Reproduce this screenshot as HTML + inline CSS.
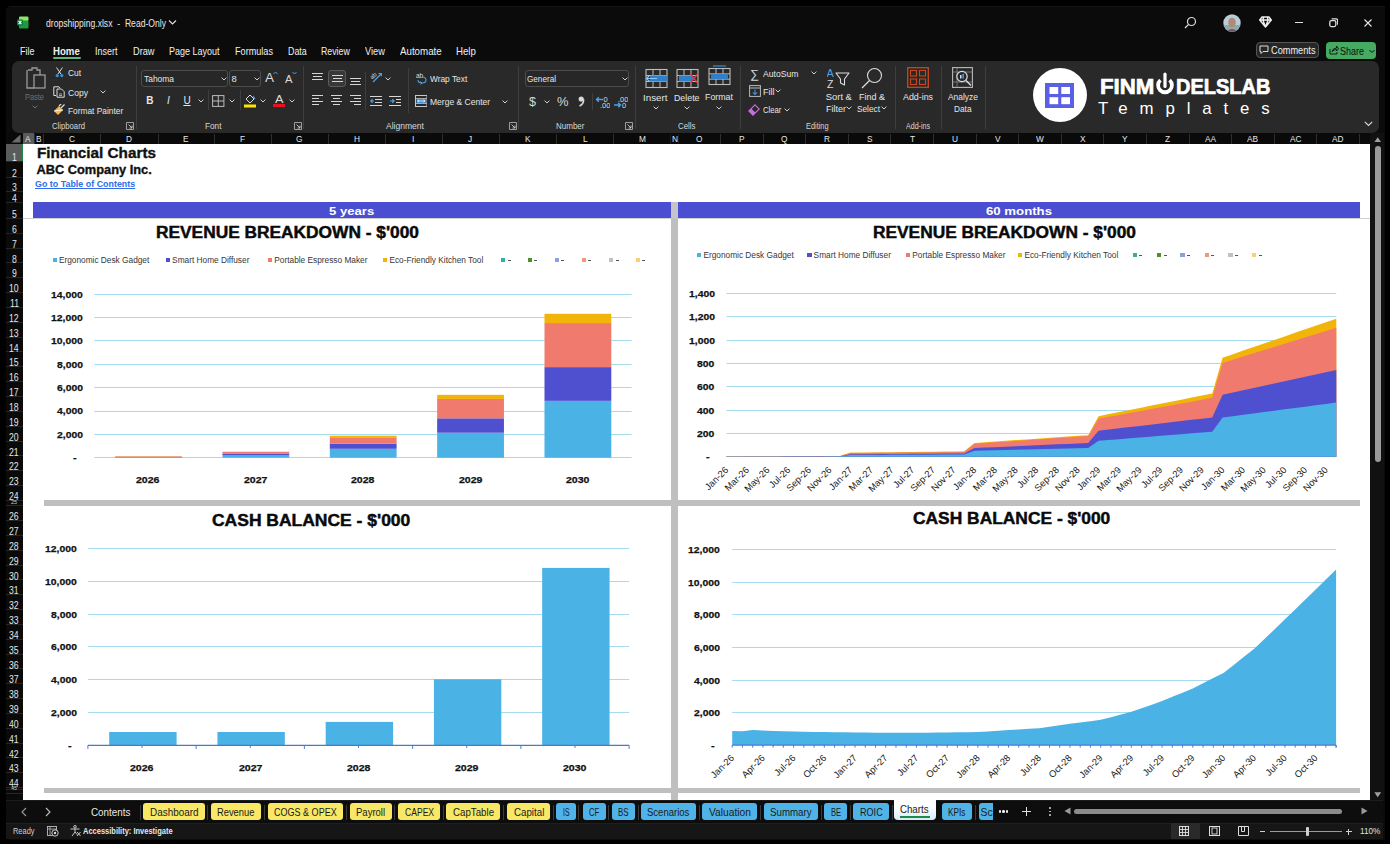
<!DOCTYPE html>
<html><head><meta charset="utf-8"><title>dropshipping.xlsx</title>
<style>
html,body{margin:0;padding:0;}
body{width:1390px;height:844px;overflow:hidden;background:#000;position:relative;font-family:'Liberation Sans', sans-serif;}
</style></head><body>
<div style="position:absolute;left:5.5px;top:5.5px;width:1379px;height:834px;background:#0b0b0b;border-radius:5px 0 0 5px;border-top:1px solid #141414;box-sizing:border-box;"></div><svg style="position:absolute;left:17px;top:16px" width="12" height="13" viewBox="0 0 12 13">
<rect x="2" y="0.5" width="9.5" height="4.5" rx="1.2" fill="#8ee56b"/>
<rect x="2" y="4.5" width="9.5" height="8" rx="1" fill="#1f9a3f"/>
<rect x="0" y="3.5" width="6" height="6" rx="1" fill="#107c41"/>
<path d="M1.6 4.8 L4.4 8.2 M4.4 4.8 L1.6 8.2" stroke="#fff" stroke-width="1.2"/>
</svg><svg style="position:absolute;left:168px;top:19px" width="9" height="7"><path d="M1 1.5 L4.5 5 L8 1.5" stroke="#ddd" stroke-width="1.2" fill="none"/></svg><svg style="position:absolute;left:1184px;top:16px" width="13" height="13" viewBox="0 0 13 13"><circle cx="7.5" cy="5.5" r="4" stroke="#ddd" stroke-width="1.2" fill="none"/><path d="M4.6 8.4 L1 12" stroke="#ddd" stroke-width="1.3"/></svg><svg style="position:absolute;left:1222.5px;top:13.5px" width="18" height="18" viewBox="0 0 18 18">
<defs><clipPath id="av"><circle cx="9" cy="9" r="8.7"/></clipPath></defs>
<g clip-path="url(#av)"><rect width="18" height="18" fill="#b9cdd6"/><rect y="11" width="18" height="7" fill="#8fa9b3"/>
<ellipse cx="9" cy="8.5" rx="3.8" ry="4.8" fill="#b08a78"/><path d="M3 18 Q9 12 15 18Z" fill="#6a5a54"/></g></svg><svg style="position:absolute;left:1259px;top:16px" width="13" height="12" viewBox="0 0 13 12"><path d="M3 1 H10 L12.3 4 L6.5 11 L0.7 4 Z M0.7 4 H12.3 M4.6 1 L3.9 4 L6.5 11 L9.1 4 L8.4 1" stroke="#f0f0f0" stroke-width="1.4" fill="none" stroke-linejoin="round"/></svg><div style="position:absolute;left:1295px;top:21.6px;width:7.5px;height:1.6px;background:#e0e0e0;"></div><svg style="position:absolute;left:1328.5px;top:18px" width="9.5" height="9.5" viewBox="0 0 9.5 9.5"><rect x="0.8" y="2.6" width="6" height="6" rx="1.5" stroke="#e0e0e0" stroke-width="1.3" fill="none"/><path d="M2.6 0.8 H7 Q8.7 0.8 8.7 2.5 V6.8" stroke="#e0e0e0" stroke-width="1.3" fill="none"/></svg><svg style="position:absolute;left:1363.5px;top:18.5px" width="8" height="8" viewBox="0 0 8 8"><path d="M0.5 0.5 L7.5 7.5 M7.5 0.5 L0.5 7.5" stroke="#e8e8e8" stroke-width="1.1"/></svg><div style="position:absolute;left:53px;top:57px;width:28px;height:2px;background:#5fb878;border-radius:1px;"></div><div style="position:absolute;left:1255.5px;top:41.5px;width:63px;height:16.5px;border:1px solid #555;border-radius:4px;background:#262626;box-sizing:border-box"></div><svg style="position:absolute;left:1259px;top:45px" width="10" height="10" viewBox="0 0 10 10"><path d="M1 1 H9 V6.5 H4 L2 8.5 V6.5 H1 Z" stroke="#ddd" stroke-width="1" fill="none"/></svg><div style="position:absolute;left:1326px;top:41.5px;width:50px;height:17px;border-radius:4px;background:#45aa62"></div><svg style="position:absolute;left:1329px;top:45px" width="10" height="10" viewBox="0 0 10 10"><path d="M1 4 V9 H8 V7 M3 6.5 Q4 3 7.5 3 V1 L9.5 4 L7.5 6 V4.5 Q5 4.5 3 6.5" stroke="#111" stroke-width="0.9" fill="none"/></svg><svg style="position:absolute;left:1368.5px;top:49px" width="6" height="5"><path d="M0.5 1 L3 3.5 L5.5 1" stroke="#111" stroke-width="1" fill="none"/></svg><div style="position:absolute;left:11.7px;top:61.3px;width:1367px;height:71.4px;background:#292929;border-radius:7px;"></div><div style="position:absolute;left:135.8px;top:66px;width:1px;height:63px;background:#3e3e3e;"></div><div style="position:absolute;left:303.4px;top:66px;width:1px;height:63px;background:#3e3e3e;"></div><div style="position:absolute;left:518.3px;top:66px;width:1px;height:63px;background:#3e3e3e;"></div><div style="position:absolute;left:635px;top:66px;width:1px;height:63px;background:#3e3e3e;"></div><div style="position:absolute;left:739.7px;top:66px;width:1px;height:63px;background:#3e3e3e;"></div><div style="position:absolute;left:894.7px;top:66px;width:1px;height:63px;background:#3e3e3e;"></div><div style="position:absolute;left:940.8px;top:66px;width:1px;height:63px;background:#3e3e3e;"></div><div style="position:absolute;left:984.5px;top:66px;width:1px;height:63px;background:#3e3e3e;"></div><svg style="position:absolute;left:125.5px;top:122px" width="8" height="8" viewBox="0 0 8 8"><path d="M0.5 0.5 H7.5 V7.5 H0.5 Z" stroke="#bbb" stroke-width="0.8" fill="none"/><path d="M2.5 2.5 L6 6 M3.5 6 H6 V3.5" stroke="#ccc" stroke-width="0.9" fill="none"/></svg><svg style="position:absolute;left:293.5px;top:122px" width="8" height="8" viewBox="0 0 8 8"><path d="M0.5 0.5 H7.5 V7.5 H0.5 Z" stroke="#bbb" stroke-width="0.8" fill="none"/><path d="M2.5 2.5 L6 6 M3.5 6 H6 V3.5" stroke="#ccc" stroke-width="0.9" fill="none"/></svg><svg style="position:absolute;left:508.9px;top:122px" width="8" height="8" viewBox="0 0 8 8"><path d="M0.5 0.5 H7.5 V7.5 H0.5 Z" stroke="#bbb" stroke-width="0.8" fill="none"/><path d="M2.5 2.5 L6 6 M3.5 6 H6 V3.5" stroke="#ccc" stroke-width="0.9" fill="none"/></svg><svg style="position:absolute;left:625.1px;top:122px" width="8" height="8" viewBox="0 0 8 8"><path d="M0.5 0.5 H7.5 V7.5 H0.5 Z" stroke="#bbb" stroke-width="0.8" fill="none"/><path d="M2.5 2.5 L6 6 M3.5 6 H6 V3.5" stroke="#ccc" stroke-width="0.9" fill="none"/></svg><svg style="position:absolute;left:25px;top:66px" width="22" height="24" viewBox="0 0 22 24">
<path d="M3 4 H7 V2 H12 V4 H15 V9 M9 22 H2 V4" stroke="#9a9a9a" stroke-width="1.3" fill="none"/>
<rect x="9" y="9" width="11" height="13" stroke="#9a9a9a" stroke-width="1.3" fill="none"/></svg><svg style="position:absolute;left:31.5px;top:105px" width="6" height="4"><path d="M0.6 0.6 L3 3 L5.4 0.6" stroke="#707070" stroke-width="1.0" fill="none"/></svg><svg style="position:absolute;left:55px;top:67px" width="9" height="11" viewBox="0 0 9 11"><path d="M1.5 0.5 L6 7 M7.5 0.5 L3 7" stroke="#ddd" stroke-width="1"/><circle cx="2.2" cy="8.6" r="1.6" fill="#3a8fd8"/><circle cx="6.8" cy="8.6" r="1.6" fill="#3a8fd8"/></svg><svg style="position:absolute;left:53px;top:86px" width="12" height="12" viewBox="0 0 12 12"><path d="M3 9.5 H0.8 V0.8 H6 L7 2" stroke="#ddd" stroke-width="1" fill="none"/><path d="M4 3 H8.5 L11.2 5.7 V11.2 H4 Z" stroke="#ddd" stroke-width="1" fill="none"/><path d="M6 8 H9 M6 9.5 H9" stroke="#ddd" stroke-width="0.7"/></svg><svg style="position:absolute;left:99.9px;top:90.2px" width="6" height="4"><path d="M0.6 0.6 L3 3 L5.4 0.6" stroke="#d0d0d0" stroke-width="1.0" fill="none"/></svg><svg style="position:absolute;left:53px;top:104px" width="12" height="12" viewBox="0 0 12 12"><path d="M1 7 L6 2 L10 6 L5 11 Z" fill="#f2b84b"/><path d="M6 2 L8.5 -0.5 M8 4 L11.5 0.5" stroke="#ddd" stroke-width="1.2"/><path d="M1 7 L10 6" stroke="#fff" stroke-width="0.8"/></svg><div style="position:absolute;left:141.2px;top:70.2px;width:86.4px;height:17.3px;border:1px solid #4c4c4c;border-radius:3px;background:#272727;box-sizing:border-box"></div><svg style="position:absolute;left:220.5px;top:76.8px" width="6" height="4"><path d="M0.6 0.6 L3 3 L5.4 0.6" stroke="#d0d0d0" stroke-width="1.0" fill="none"/></svg><div style="position:absolute;left:229.3px;top:70.2px;width:31.3px;height:17.3px;border:1px solid #4c4c4c;border-radius:3px;background:#272727;box-sizing:border-box"></div><svg style="position:absolute;left:253.5px;top:76.8px" width="6" height="4"><path d="M0.6 0.6 L3 3 L5.4 0.6" stroke="#d0d0d0" stroke-width="1.0" fill="none"/></svg><svg style="position:absolute;left:273px;top:71px" width="5" height="4"><path d="M0.5 3 L2.5 1 L4.5 3" stroke="#4aa3e8" stroke-width="1" fill="none"/></svg><svg style="position:absolute;left:292px;top:71px" width="5" height="4"><path d="M0.5 1 L2.5 3 L4.5 1" stroke="#4aa3e8" stroke-width="1" fill="none"/></svg><svg style="position:absolute;left:198px;top:99px" width="6" height="4"><path d="M0.6 0.6 L3 3 L5.4 0.6" stroke="#d0d0d0" stroke-width="1.0" fill="none"/></svg><div style="position:absolute;left:208.4px;top:90px;width:1px;height:20px;background:#3e3e3e;"></div><svg style="position:absolute;left:212px;top:94.5px" width="12.5" height="12" viewBox="0 0 12.5 12"><rect x="0.6" y="0.6" width="11.3" height="10.8" stroke="#bbb" stroke-width="1" fill="none"/><path d="M6.25 0.6 V11.4 M0.6 6 H11.9" stroke="#bbb" stroke-width="1"/></svg><svg style="position:absolute;left:229px;top:99px" width="6" height="4"><path d="M0.6 0.6 L3 3 L5.4 0.6" stroke="#d0d0d0" stroke-width="1.0" fill="none"/></svg><div style="position:absolute;left:239.6px;top:90px;width:1px;height:20px;background:#3e3e3e;"></div><svg style="position:absolute;left:243.5px;top:93px" width="12" height="15" viewBox="0 0 12 15"><path d="M2 6 L6 2 L10 6 L6 10 Z" stroke="#ddd" stroke-width="1" fill="none"/><path d="M9 3 L11 6" stroke="#4aa3e8" stroke-width="1.2"/><rect x="0" y="11.5" width="12" height="3" fill="#ffe600"/></svg><svg style="position:absolute;left:259.5px;top:99px" width="6" height="4"><path d="M0.6 0.6 L3 3 L5.4 0.6" stroke="#d0d0d0" stroke-width="1.0" fill="none"/></svg><div style="position:absolute;left:273.2px;top:104.3px;width:11.5px;height:3px;background:#e81123;"></div><svg style="position:absolute;left:289px;top:99px" width="6" height="4"><path d="M0.6 0.6 L3 3 L5.4 0.6" stroke="#d0d0d0" stroke-width="1.0" fill="none"/></svg><svg style="position:absolute;left:312px;top:73px" width="11" height="10"><rect x="0.0" y="0" width="11" height="1" fill="#d6d6d6"/><rect x="1.0" y="3" width="9" height="1" fill="#d6d6d6"/><rect x="0.0" y="6" width="11" height="1" fill="#d6d6d6"/></svg><div style="position:absolute;left:328.2px;top:69.9px;width:17.7px;height:17.4px;border:1px solid #5a5a5a;border-radius:3px;background:#383838;box-sizing:border-box"></div><svg style="position:absolute;left:331.5px;top:75px" width="11" height="10"><rect x="0.0" y="0" width="11" height="1" fill="#d6d6d6"/><rect x="1.0" y="3" width="9" height="1" fill="#d6d6d6"/><rect x="0.0" y="6" width="11" height="1" fill="#d6d6d6"/></svg><svg style="position:absolute;left:350px;top:78px" width="11" height="10"><rect x="0.0" y="0" width="11" height="1" fill="#d6d6d6"/><rect x="1.0" y="3" width="9" height="1" fill="#d6d6d6"/><rect x="0.0" y="6" width="11" height="1" fill="#d6d6d6"/></svg><div style="position:absolute;left:365.2px;top:72px;width:1px;height:38px;background:#3e3e3e;"></div><svg style="position:absolute;left:370px;top:71px" width="13" height="13" viewBox="0 0 13 13"><path d="M3 11 L11 3" stroke="#4aa3e8" stroke-width="1.3"/><path d="M8.5 2.5 H11.3 V5.3" stroke="#4aa3e8" stroke-width="1.2" fill="none"/><text x="0" y="7" font-size="6" fill="#ddd" font-family="Liberation Sans" transform="rotate(-45 3 5)">ab</text></svg><svg style="position:absolute;left:384.8px;top:76.5px" width="6" height="4"><path d="M0.6 0.6 L3 3 L5.4 0.6" stroke="#d0d0d0" stroke-width="1.0" fill="none"/></svg><svg style="position:absolute;left:312px;top:95px" width="11" height="13"><rect x="0" y="0" width="11" height="1" fill="#d6d6d6"/><rect x="0" y="3" width="7" height="1" fill="#d6d6d6"/><rect x="0" y="6" width="11" height="1" fill="#d6d6d6"/><rect x="0" y="9" width="7" height="1" fill="#d6d6d6"/></svg><svg style="position:absolute;left:331px;top:95px" width="11" height="13"><rect x="0.0" y="0" width="11" height="1" fill="#d6d6d6"/><rect x="2.0" y="3" width="7" height="1" fill="#d6d6d6"/><rect x="0.0" y="6" width="11" height="1" fill="#d6d6d6"/><rect x="2.0" y="9" width="7" height="1" fill="#d6d6d6"/></svg><svg style="position:absolute;left:350px;top:95px" width="11" height="13"><rect x="0" y="0" width="11" height="1" fill="#d6d6d6"/><rect x="4" y="3" width="7" height="1" fill="#d6d6d6"/><rect x="0" y="6" width="11" height="1" fill="#d6d6d6"/><rect x="4" y="9" width="7" height="1" fill="#d6d6d6"/></svg><svg style="position:absolute;left:370px;top:95px" width="12" height="12" viewBox="0 0 12 12"><path d="M0 1.5 H12 M5 4.5 H12 M5 7.5 H12 M0 10.5 H12" stroke="#d6d6d6" stroke-width="1"/><path d="M4 6 H0.8 M2.5 4.2 L0.8 6 L2.5 7.8" stroke="#4aa3e8" stroke-width="1.2" fill="none"/></svg><svg style="position:absolute;left:389px;top:95px" width="12" height="12" viewBox="0 0 12 12"><path d="M0 1.5 H12 M7 4.5 H12 M7 7.5 H12 M0 10.5 H12" stroke="#d6d6d6" stroke-width="1"/><path d="M0.8 6 H5 M3.3 4.2 L5 6 L3.3 7.8" stroke="#4aa3e8" stroke-width="1.2" fill="none"/></svg><div style="position:absolute;left:407.6px;top:68px;width:1px;height:45px;background:#3e3e3e;"></div><svg style="position:absolute;left:416px;top:72px" width="12" height="13" viewBox="0 0 12 13"><text x="0" y="6" font-size="6.5" fill="#ddd" font-family="Liberation Sans">ab</text><path d="M2 8 Q2 11 6 11 Q10 11 10 8 Q10 5 6 5" stroke="#4aa3e8" stroke-width="1.1" fill="none"/><path d="M4.5 9.5 L6 11 L4.5 12.5" stroke="#4aa3e8" stroke-width="1" fill="none"/></svg><svg style="position:absolute;left:414.5px;top:95px" width="12.5" height="12" viewBox="0 0 12.5 12"><rect x="0.5" y="0.5" width="11.5" height="11" stroke="#c8c8c8" stroke-width="1" fill="none"/><path d="M0.5 3.5 H12 M0.5 8.5 H12" stroke="#c8c8c8" stroke-width="0.8"/><rect x="1.5" y="4" width="9.5" height="4" fill="#3a8fd8"/><path d="M2.5 6 H10 M4 4.8 L2.5 6 L4 7.2 M8.5 4.8 L10 6 L8.5 7.2" stroke="#e8f4ff" stroke-width="0.8" fill="none"/></svg><svg style="position:absolute;left:502px;top:100px" width="6" height="4"><path d="M0.6 0.6 L3 3 L5.4 0.6" stroke="#d0d0d0" stroke-width="1.0" fill="none"/></svg><div style="position:absolute;left:525.2px;top:69.9px;width:104.3px;height:17.6px;border:1px solid #4c4c4c;border-radius:3px;background:#272727;box-sizing:border-box"></div><svg style="position:absolute;left:621.5px;top:76.6px" width="6" height="4"><path d="M0.6 0.6 L3 3 L5.4 0.6" stroke="#d0d0d0" stroke-width="1.0" fill="none"/></svg><svg style="position:absolute;left:544px;top:99.5px" width="6" height="4"><path d="M0.6 0.6 L3 3 L5.4 0.6" stroke="#d0d0d0" stroke-width="1.0" fill="none"/></svg><svg style="position:absolute;left:578px;top:96px" width="7" height="11" viewBox="0 0 7 11"><circle cx="3.2" cy="3" r="2.6" fill="#d8d8d8"/><path d="M5.6 3.2 Q5.8 8 1.5 10" stroke="#d8d8d8" stroke-width="1.6" fill="none"/></svg><div style="position:absolute;left:591.6px;top:93px;width:1px;height:17px;background:#3e3e3e;"></div><svg style="position:absolute;left:595px;top:95px" width="15" height="14" viewBox="0 0 15 14"><text x="8.5" y="6.5" font-size="7.5" fill="#ddd" font-family="Liberation Sans">0</text><text x="5" y="12.8" font-size="7.5" fill="#ddd" font-family="Liberation Sans">.00</text><path d="M8 4.5 H1.5 M3.8 2.2 L1.5 4.5 L3.8 6.8" stroke="#4aa3e8" stroke-width="1.4" fill="none"/></svg><svg style="position:absolute;left:613px;top:95px" width="15" height="14" viewBox="0 0 15 14"><text x="5" y="6.5" font-size="7.5" fill="#ddd" font-family="Liberation Sans">.00</text><text x="9" y="12.8" font-size="7.5" fill="#ddd" font-family="Liberation Sans">0</text><path d="M1 10 H7.5 M5.2 7.7 L7.5 10 L5.2 12.3" stroke="#4aa3e8" stroke-width="1.4" fill="none"/></svg><svg style="position:absolute;left:644.9px;top:67.5px" width="23" height="21" viewBox="0 0 23 21"><rect x="1" y="1.5" width="21" height="18.0" stroke="#bdbdbd" stroke-width="1.1" fill="none"/><path d="M1 7.5 H22" stroke="#bdbdbd" stroke-width="1"/><path d="M1 13.5 H22" stroke="#bdbdbd" stroke-width="1"/><path d="M8 1.5 V19.5" stroke="#bdbdbd" stroke-width="1"/><path d="M15 1.5 V19.5" stroke="#bdbdbd" stroke-width="1"/><rect x="5" y="7.5" width="18" height="6.0" fill="#2f80c8"/><path d="M12 10.5 H1.5 M4.5 7.5 L1.5 10.5 L4.5 13.5" stroke="#8fc6f5" stroke-width="1.2" fill="none"/></svg><svg style="position:absolute;left:676.3px;top:67.5px" width="23" height="21" viewBox="0 0 23 21"><rect x="1" y="1.5" width="21" height="18.0" stroke="#bdbdbd" stroke-width="1.1" fill="none"/><path d="M1 7.5 H22" stroke="#bdbdbd" stroke-width="1"/><path d="M1 13.5 H22" stroke="#bdbdbd" stroke-width="1"/><path d="M8 1.5 V19.5" stroke="#bdbdbd" stroke-width="1"/><path d="M15 1.5 V19.5" stroke="#bdbdbd" stroke-width="1"/><rect x="3" y="7.5" width="14" height="6.0" fill="#2f80c8"/><path d="M14 5.5 L22 15.5 M22 5.5 L14 15.5" stroke="#e23b3b" stroke-width="1.4"/></svg><svg style="position:absolute;left:707.7px;top:64.5px" width="23" height="21" viewBox="0 0 23 21"><path d="M5 1 H18" stroke="#3a8fd8" stroke-width="1.2"/><rect x="1" y="3.5" width="21" height="16.0" stroke="#bdbdbd" stroke-width="1.1" fill="none"/><path d="M1 8.833333333333332 H22" stroke="#bdbdbd" stroke-width="1"/><path d="M1 14.166666666666666 H22" stroke="#bdbdbd" stroke-width="1"/><path d="M8 3.5 V19.5" stroke="#bdbdbd" stroke-width="1"/><path d="M15 3.5 V19.5" stroke="#bdbdbd" stroke-width="1"/><rect x="3" y="8.833333333333332" width="17" height="5.333333333333333" fill="#2f80c8"/></svg><svg style="position:absolute;left:652.6px;top:106px" width="6" height="4"><path d="M0.6 0.6 L3 3 L5.4 0.6" stroke="#d0d0d0" stroke-width="1.0" fill="none"/></svg><svg style="position:absolute;left:683.7px;top:106px" width="6" height="4"><path d="M0.6 0.6 L3 3 L5.4 0.6" stroke="#d0d0d0" stroke-width="1.0" fill="none"/></svg><svg style="position:absolute;left:715.8px;top:106px" width="6" height="4"><path d="M0.6 0.6 L3 3 L5.4 0.6" stroke="#d0d0d0" stroke-width="1.0" fill="none"/></svg><svg style="position:absolute;left:810.9px;top:71px" width="6" height="4"><path d="M0.6 0.6 L3 3 L5.4 0.6" stroke="#d0d0d0" stroke-width="1.0" fill="none"/></svg><svg style="position:absolute;left:748.5px;top:85px" width="12" height="12" viewBox="0 0 12 12"><rect x="0.6" y="0.6" width="10.8" height="10.8" stroke="#bbb" stroke-width="1" fill="none"/><path d="M0.6 3 H11.4" stroke="#bbb" stroke-width="1"/><path d="M6 4.5 V9.5 M3.8 7.3 L6 9.5 L8.2 7.3" stroke="#3a8fd8" stroke-width="1.2" fill="none"/></svg><svg style="position:absolute;left:775px;top:89.4px" width="6" height="4"><path d="M0.6 0.6 L3 3 L5.4 0.6" stroke="#d0d0d0" stroke-width="1.0" fill="none"/></svg><svg style="position:absolute;left:748px;top:104px" width="12" height="12" viewBox="0 0 12 12"><path d="M7 0.8 L11.2 5 L5 11.2 L0.8 7 Z" stroke="#c86ee0" stroke-width="1.1" fill="none"/><path d="M0.8 7 L5 11.2 L7.5 8.7 L3.3 4.5 Z" fill="#c86ee0"/></svg><svg style="position:absolute;left:783.5px;top:108px" width="6" height="4"><path d="M0.6 0.6 L3 3 L5.4 0.6" stroke="#d0d0d0" stroke-width="1.0" fill="none"/></svg><svg style="position:absolute;left:827px;top:68px" width="23" height="20" viewBox="0 0 23 20">
<text x="-0.5" y="9" font-size="11" fill="#4aa3e8" font-family="Liberation Sans">A</text>
<text x="0" y="19.5" font-size="10.5" fill="#ddd" font-family="Liberation Sans">Z</text>
<path d="M9 5 H22 L17.5 11 V17 L13.5 15 V11 Z" stroke="#ddd" stroke-width="1.1" fill="none" stroke-linejoin="round"/></svg><svg style="position:absolute;left:845.5px;top:106.3px" width="6" height="4"><path d="M0.6 0.6 L3 3 L5.4 0.6" stroke="#d0d0d0" stroke-width="1.0" fill="none"/></svg><svg style="position:absolute;left:861px;top:67px" width="22" height="22" viewBox="0 0 22 22"><circle cx="13.5" cy="8.5" r="7" stroke="#ddd" stroke-width="1.1" fill="none"/><path d="M8.5 13.5 L1 21" stroke="#ddd" stroke-width="1.2"/></svg><svg style="position:absolute;left:881px;top:106.3px" width="6" height="4"><path d="M0.6 0.6 L3 3 L5.4 0.6" stroke="#d0d0d0" stroke-width="1.0" fill="none"/></svg><svg style="position:absolute;left:907px;top:66.5px" width="22" height="21" viewBox="0 0 22 21"><rect x="0.7" y="0.7" width="20.6" height="19.6" stroke="#c8471d" stroke-width="1.3" fill="none"/><rect x="3.5" y="3.5" width="6" height="5.5" stroke="#c8471d" stroke-width="1.1" fill="none"/><rect x="12.5" y="3.5" width="6" height="5.5" stroke="#c8471d" stroke-width="1.1" fill="none"/><rect x="3.5" y="12" width="6" height="5.5" stroke="#c8471d" stroke-width="1.1" fill="none"/><rect x="12.5" y="12" width="6" height="5.5" stroke="#c8471d" stroke-width="1.1" fill="none"/></svg><svg style="position:absolute;left:952px;top:67px" width="21" height="21" viewBox="0 0 21 21">
<rect x="0.6" y="0.6" width="19.8" height="19.8" stroke="#bbb" stroke-width="1.1" fill="none"/>
<path d="M0.6 5 H20.4 M0.6 15 H20.4 M5 0.6 V20.4" stroke="#888" stroke-width="0.8"/>
<circle cx="10" cy="9.5" r="5.2" stroke="#ddd" stroke-width="1.2" fill="#292929"/><rect x="8" y="8" width="1.5" height="3.5" fill="#ddd"/><rect x="10.3" y="6.8" width="1.7" height="4.7" fill="#3a8fd8"/>
<path d="M14 13.5 L19 18.5" stroke="#ddd" stroke-width="1.4"/></svg><svg style="position:absolute;left:1364px;top:120.5px" width="9" height="6"><path d="M0.8 0.8 L4.5 4.5 L8.2 0.8" stroke="#ddd" stroke-width="1.1" fill="none"/></svg><div style="position:absolute;left:1032.6px;top:67.9px;width:54.4px;height:54.4px;border-radius:50%;background:#fff"></div><svg style="position:absolute;left:1044.9px;top:82.5px" width="29.5" height="25.2" viewBox="0 0 29.5 25.2"><rect x="0" y="0" width="29.5" height="25.2" fill="#5b5fe3"/><rect x="4.5" y="4" width="8.7" height="7" fill="#fff"/><rect x="16.3" y="4" width="8.7" height="7" fill="#fff"/><rect x="4.5" y="14.2" width="8.7" height="7" fill="#fff"/><rect x="16.3" y="14.2" width="8.7" height="7" fill="#fff"/></svg><svg style="position:absolute;left:1154px;top:72px" width="22" height="24" viewBox="0 0 22 24"><path d="M6.4 8.2 A6.9 6.9 0 1 0 15.6 8.2" stroke="#fff" stroke-width="3.8" fill="none"/><path d="M11 2.2 V14.5" stroke="#fff" stroke-width="3.2" stroke-linecap="round"/></svg><div style="position:absolute;left:5.5px;top:133px;width:1365px;height:10.5px;background:#0a0a0a;"></div><svg style="position:absolute;left:10px;top:134px" width="11" height="9"><path d="M10.5 0.5 V8.5 H1.5 Z" fill="#6a6a6a"/></svg><div style="position:absolute;left:22.5px;top:133px;width:11.5px;height:10.5px;background:#5b5b5b;"></div><div style="position:absolute;left:33.5px;top:133.5px;width:1px;height:10px;background:#2e2e2e;"></div><div style="position:absolute;left:43.0px;top:133.5px;width:1px;height:10px;background:#2e2e2e;"></div><div style="position:absolute;left:99.7px;top:133.5px;width:1px;height:10px;background:#2e2e2e;"></div><div style="position:absolute;left:157.5px;top:133.5px;width:1px;height:10px;background:#2e2e2e;"></div><div style="position:absolute;left:213.7px;top:133.5px;width:1px;height:10px;background:#2e2e2e;"></div><div style="position:absolute;left:270.5px;top:133.5px;width:1px;height:10px;background:#2e2e2e;"></div><div style="position:absolute;left:327.5px;top:133.5px;width:1px;height:10px;background:#2e2e2e;"></div><div style="position:absolute;left:384.5px;top:133.5px;width:1px;height:10px;background:#2e2e2e;"></div><div style="position:absolute;left:441.5px;top:133.5px;width:1px;height:10px;background:#2e2e2e;"></div><div style="position:absolute;left:498.5px;top:133.5px;width:1px;height:10px;background:#2e2e2e;"></div><div style="position:absolute;left:556.3px;top:133.5px;width:1px;height:10px;background:#2e2e2e;"></div><div style="position:absolute;left:613.4px;top:133.5px;width:1px;height:10px;background:#2e2e2e;"></div><div style="position:absolute;left:670.2px;top:133.5px;width:1px;height:10px;background:#1c1c1c;"></div><div style="position:absolute;left:677.8px;top:133.5px;width:1px;height:10px;background:#1c1c1c;"></div><div style="position:absolute;left:720.0px;top:133.5px;width:1px;height:10px;background:#2e2e2e;"></div><div style="position:absolute;left:762.6px;top:133.5px;width:1px;height:10px;background:#2e2e2e;"></div><div style="position:absolute;left:805.2px;top:133.5px;width:1px;height:10px;background:#2e2e2e;"></div><div style="position:absolute;left:847.8000000000001px;top:133.5px;width:1px;height:10px;background:#2e2e2e;"></div><div style="position:absolute;left:890.4000000000001px;top:133.5px;width:1px;height:10px;background:#2e2e2e;"></div><div style="position:absolute;left:933.0000000000001px;top:133.5px;width:1px;height:10px;background:#2e2e2e;"></div><div style="position:absolute;left:975.6000000000001px;top:133.5px;width:1px;height:10px;background:#2e2e2e;"></div><div style="position:absolute;left:1018.2000000000002px;top:133.5px;width:1px;height:10px;background:#2e2e2e;"></div><div style="position:absolute;left:1060.8000000000002px;top:133.5px;width:1px;height:10px;background:#2e2e2e;"></div><div style="position:absolute;left:1103.4px;top:133.5px;width:1px;height:10px;background:#2e2e2e;"></div><div style="position:absolute;left:1146.0px;top:133.5px;width:1px;height:10px;background:#2e2e2e;"></div><div style="position:absolute;left:1188.6px;top:133.5px;width:1px;height:10px;background:#2e2e2e;"></div><div style="position:absolute;left:1231.1999999999998px;top:133.5px;width:1px;height:10px;background:#2e2e2e;"></div><div style="position:absolute;left:1273.7999999999997px;top:133.5px;width:1px;height:10px;background:#2e2e2e;"></div><div style="position:absolute;left:1316.3999999999996px;top:133.5px;width:1px;height:10px;background:#2e2e2e;"></div><div style="position:absolute;left:1358.9999999999995px;top:133.5px;width:1px;height:10px;background:#2e2e2e;"></div><div style="position:absolute;left:22.5px;top:142.5px;width:11.5px;height:1px;background:#1e8a4a;"></div><div style="position:absolute;left:5.5px;top:143.5px;width:17px;height:656.5px;background:#0a0a0a;"></div><div style="position:absolute;left:5.5px;top:143.5px;width:17px;height:17.5px;background:#5b5b5b;"></div><div style="position:absolute;left:22px;top:143.5px;width:1px;height:17.5px;background:#1e8a4a;"></div><div style="position:absolute;left:5.5px;top:160.5px;width:17px;height:1px;background:#262626;"></div><div style="position:absolute;left:5.5px;top:176.5px;width:17px;height:1px;background:#262626;"></div><div style="position:absolute;left:5.5px;top:190.5px;width:17px;height:1px;background:#262626;"></div><div style="position:absolute;left:5.5px;top:202.0px;width:17px;height:1px;background:#262626;"></div><div style="position:absolute;left:5.5px;top:217.8px;width:17px;height:1px;background:#262626;"></div><div style="position:absolute;left:5.5px;top:232.65px;width:17px;height:1px;background:#262626;"></div><div style="position:absolute;left:5.5px;top:247.5px;width:17px;height:1px;background:#262626;"></div><div style="position:absolute;left:5.5px;top:262.35px;width:17px;height:1px;background:#262626;"></div><div style="position:absolute;left:5.5px;top:277.20000000000005px;width:17px;height:1px;background:#262626;"></div><div style="position:absolute;left:5.5px;top:292.05000000000007px;width:17px;height:1px;background:#262626;"></div><div style="position:absolute;left:5.5px;top:306.9000000000001px;width:17px;height:1px;background:#262626;"></div><div style="position:absolute;left:5.5px;top:321.7500000000001px;width:17px;height:1px;background:#262626;"></div><div style="position:absolute;left:5.5px;top:336.60000000000014px;width:17px;height:1px;background:#262626;"></div><div style="position:absolute;left:5.5px;top:351.45000000000016px;width:17px;height:1px;background:#262626;"></div><div style="position:absolute;left:5.5px;top:366.3000000000002px;width:17px;height:1px;background:#262626;"></div><div style="position:absolute;left:5.5px;top:381.1500000000002px;width:17px;height:1px;background:#262626;"></div><div style="position:absolute;left:5.5px;top:396.0000000000002px;width:17px;height:1px;background:#262626;"></div><div style="position:absolute;left:5.5px;top:410.85000000000025px;width:17px;height:1px;background:#262626;"></div><div style="position:absolute;left:5.5px;top:425.7000000000003px;width:17px;height:1px;background:#262626;"></div><div style="position:absolute;left:5.5px;top:440.5500000000003px;width:17px;height:1px;background:#262626;"></div><div style="position:absolute;left:5.5px;top:455.4000000000003px;width:17px;height:1px;background:#262626;"></div><div style="position:absolute;left:5.5px;top:470.25000000000034px;width:17px;height:1px;background:#262626;"></div><div style="position:absolute;left:5.5px;top:485.10000000000036px;width:17px;height:1px;background:#262626;"></div><div style="position:absolute;left:5.5px;top:500.0px;width:17px;height:1px;background:#262626;"></div><div style="position:absolute;left:5.5px;top:505.2px;width:17px;height:1px;background:#262626;"></div><div style="position:absolute;left:5.5px;top:520.13px;width:17px;height:1px;background:#262626;"></div><div style="position:absolute;left:5.5px;top:534.96px;width:17px;height:1px;background:#262626;"></div><div style="position:absolute;left:5.5px;top:549.7900000000001px;width:17px;height:1px;background:#262626;"></div><div style="position:absolute;left:5.5px;top:564.6200000000001px;width:17px;height:1px;background:#262626;"></div><div style="position:absolute;left:5.5px;top:579.4500000000002px;width:17px;height:1px;background:#262626;"></div><div style="position:absolute;left:5.5px;top:594.2800000000002px;width:17px;height:1px;background:#262626;"></div><div style="position:absolute;left:5.5px;top:609.1100000000002px;width:17px;height:1px;background:#262626;"></div><div style="position:absolute;left:5.5px;top:623.9400000000003px;width:17px;height:1px;background:#262626;"></div><div style="position:absolute;left:5.5px;top:638.7700000000003px;width:17px;height:1px;background:#262626;"></div><div style="position:absolute;left:5.5px;top:653.6000000000004px;width:17px;height:1px;background:#262626;"></div><div style="position:absolute;left:5.5px;top:668.4300000000004px;width:17px;height:1px;background:#262626;"></div><div style="position:absolute;left:5.5px;top:683.2600000000004px;width:17px;height:1px;background:#262626;"></div><div style="position:absolute;left:5.5px;top:698.0900000000005px;width:17px;height:1px;background:#262626;"></div><div style="position:absolute;left:5.5px;top:712.9200000000005px;width:17px;height:1px;background:#262626;"></div><div style="position:absolute;left:5.5px;top:727.7500000000006px;width:17px;height:1px;background:#262626;"></div><div style="position:absolute;left:5.5px;top:742.5800000000006px;width:17px;height:1px;background:#262626;"></div><div style="position:absolute;left:5.5px;top:757.4100000000007px;width:17px;height:1px;background:#262626;"></div><div style="position:absolute;left:5.5px;top:772.2400000000007px;width:17px;height:1px;background:#262626;"></div><div style="position:absolute;left:5.5px;top:787.0700000000007px;width:17px;height:1px;background:#262626;"></div><div style="position:absolute;left:5.5px;top:788.7px;width:17px;height:1px;background:#262626;"></div><div style="position:absolute;left:5.5px;top:792.7px;width:17px;height:1px;background:#262626;"></div><div style="position:absolute;left:5.5px;top:799.8px;width:17px;height:1px;background:#262626;"></div><div style="position:absolute;left:22.5px;top:143.5px;width:1347.5px;height:656.5px;background:#ffffff;"></div><div style="position:absolute;left:1370px;top:133px;width:14px;height:667px;background:#111111;"></div><svg style="position:absolute;left:1374px;top:136.5px" width="7.5" height="5.5"><path d="M3.7 0.3 L7.2 5.2 H0.3 Z" fill="#a0a0a0"/></svg><div style="position:absolute;left:1374.8px;top:145.8px;width:5.8px;height:316px;background:#9a9a9a;border-radius:3px;"></div><svg style="position:absolute;left:1374px;top:792px" width="7.5" height="5.5"><path d="M0.3 0.3 H7.2 L3.7 5.2 Z" fill="#a0a0a0"/></svg><div style="position:absolute;left:22.5px;top:217.8px;width:1347.5px;height:1px;background:#d0d0d0;"></div><div style="position:absolute;left:33px;top:202px;width:637.7px;height:16px;background:#4b4ed0;"></div><div style="position:absolute;left:677.4px;top:202px;width:682.4px;height:16px;background:#4b4ed0;"></div><div style="position:absolute;left:670.7px;top:202px;width:7px;height:16px;background:#c4c4cc;"></div><div style="position:absolute;left:670.7px;top:218px;width:7px;height:582px;background:#bfbfbf;"></div><div style="position:absolute;left:43.5px;top:500.1px;width:627.2px;height:5.8px;background:#bfbfbf;"></div><div style="position:absolute;left:677.7px;top:500.1px;width:681.9px;height:5.8px;background:#bfbfbf;"></div><div style="position:absolute;left:43.5px;top:787.8px;width:627.2px;height:5.5px;background:#bfbfbf;"></div><div style="position:absolute;left:677.7px;top:787.8px;width:681.9px;height:5.5px;background:#bfbfbf;"></div><div style="position:absolute;left:52.6px;top:257.59999999999997px;width:4.4px;height:4.6px;background:#4bb2e6;"></div><div style="position:absolute;left:165.8px;top:257.59999999999997px;width:4.4px;height:4.6px;background:#4f50d0;"></div><div style="position:absolute;left:268px;top:257.59999999999997px;width:4.4px;height:4.6px;background:#f07a6d;"></div><div style="position:absolute;left:383.1px;top:257.59999999999997px;width:4.4px;height:4.6px;background:#f3b40a;"></div><div style="position:absolute;left:501px;top:257.59999999999997px;width:4.4px;height:4.6px;background:#2bb3a8;"></div><div style="position:absolute;left:507.5px;top:259.9px;width:3px;height:1px;background:#555;"></div><div style="position:absolute;left:527.9px;top:257.59999999999997px;width:4.4px;height:4.6px;background:#4e8f2e;"></div><div style="position:absolute;left:534.4px;top:259.9px;width:3px;height:1px;background:#555;"></div><div style="position:absolute;left:554.7px;top:257.59999999999997px;width:4.4px;height:4.6px;background:#8ea0dc;"></div><div style="position:absolute;left:561.2px;top:259.9px;width:3px;height:1px;background:#555;"></div><div style="position:absolute;left:581.6px;top:257.59999999999997px;width:4.4px;height:4.6px;background:#ee9a7a;"></div><div style="position:absolute;left:588.1px;top:259.9px;width:3px;height:1px;background:#555;"></div><div style="position:absolute;left:609px;top:257.59999999999997px;width:4.4px;height:4.6px;background:#c0c0c0;"></div><div style="position:absolute;left:615.5px;top:259.9px;width:3px;height:1px;background:#555;"></div><div style="position:absolute;left:635.8px;top:257.59999999999997px;width:4.4px;height:4.6px;background:#ffcc77;"></div><div style="position:absolute;left:642.3px;top:259.9px;width:3px;height:1px;background:#555;"></div><div style="position:absolute;left:697.1px;top:252.6px;width:4.4px;height:4.6px;background:#4bb2e6;"></div><div style="position:absolute;left:807.3px;top:252.6px;width:4.4px;height:4.6px;background:#4f50d0;"></div><div style="position:absolute;left:906px;top:252.6px;width:4.4px;height:4.6px;background:#f07a6d;"></div><div style="position:absolute;left:1018.1px;top:252.6px;width:4.4px;height:4.6px;background:#f3b40a;"></div><div style="position:absolute;left:1132.8px;top:252.6px;width:4.4px;height:4.6px;background:#2bb3a8;"></div><div style="position:absolute;left:1139.3px;top:254.9px;width:3px;height:1px;background:#555;"></div><div style="position:absolute;left:1157px;top:252.6px;width:4.4px;height:4.6px;background:#4e8f2e;"></div><div style="position:absolute;left:1163.5px;top:254.9px;width:3px;height:1px;background:#555;"></div><div style="position:absolute;left:1180.3px;top:252.6px;width:4.4px;height:4.6px;background:#8ea0dc;"></div><div style="position:absolute;left:1186.8px;top:254.9px;width:3px;height:1px;background:#555;"></div><div style="position:absolute;left:1204.5px;top:252.6px;width:4.4px;height:4.6px;background:#ee9a7a;"></div><div style="position:absolute;left:1211.0px;top:254.9px;width:3px;height:1px;background:#555;"></div><div style="position:absolute;left:1228.3px;top:252.6px;width:4.4px;height:4.6px;background:#c0c0c0;"></div><div style="position:absolute;left:1234.8px;top:254.9px;width:3px;height:1px;background:#555;"></div><div style="position:absolute;left:1252px;top:252.6px;width:4.4px;height:4.6px;background:#ffcc77;"></div><div style="position:absolute;left:1258.5px;top:254.9px;width:3px;height:1px;background:#555;"></div><svg style="position:absolute;left:0;top:0" width="1390" height="844"><line x1="94.3" y1="294.5" x2="631.6" y2="294.5" stroke="#a6dbee" stroke-width="1"/><line x1="94.3" y1="317.5" x2="631.6" y2="317.5" stroke="#a6dbee" stroke-width="1"/><line x1="94.3" y1="340.5" x2="631.6" y2="340.5" stroke="#a6dbee" stroke-width="1"/><line x1="94.3" y1="364.5" x2="631.6" y2="364.5" stroke="#a6dbee" stroke-width="1"/><line x1="94.3" y1="387.5" x2="631.6" y2="387.5" stroke="#a6dbee" stroke-width="1"/><line x1="94.3" y1="411.5" x2="631.6" y2="411.5" stroke="#a6dbee" stroke-width="1"/><line x1="94.3" y1="434.5" x2="631.6" y2="434.5" stroke="#a6dbee" stroke-width="1"/><line x1="94.3" y1="457.5" x2="631.6" y2="457.5" stroke="#a6dbee" stroke-width="1"/><rect x="115.10" y="457.23" width="66.80" height="0.47" fill="#4bb2e6"/><rect x="115.10" y="456.88" width="66.80" height="0.35" fill="#4f50d0"/><rect x="115.10" y="456.30" width="66.80" height="0.58" fill="#f07a6d"/><rect x="115.10" y="456.10" width="66.80" height="0.20" fill="#f3b40a"/><rect x="222.45" y="455.00" width="66.80" height="2.70" fill="#4bb2e6"/><rect x="222.45" y="453.50" width="66.80" height="1.51" fill="#4f50d0"/><rect x="222.45" y="451.86" width="66.80" height="1.63" fill="#f07a6d"/><rect x="222.45" y="451.71" width="66.80" height="0.15" fill="#f3b40a"/><rect x="329.80" y="448.81" width="66.80" height="8.89" fill="#4bb2e6"/><rect x="329.80" y="443.61" width="66.80" height="5.19" fill="#4f50d0"/><rect x="329.80" y="437.32" width="66.80" height="6.29" fill="#f07a6d"/><rect x="329.80" y="435.72" width="66.80" height="1.60" fill="#f3b40a"/><rect x="437.15" y="432.72" width="66.80" height="24.98" fill="#4bb2e6"/><rect x="437.15" y="418.33" width="66.80" height="14.39" fill="#4f50d0"/><rect x="437.15" y="398.95" width="66.80" height="19.39" fill="#f07a6d"/><rect x="437.15" y="394.85" width="66.80" height="4.10" fill="#f3b40a"/><rect x="544.50" y="400.86" width="66.80" height="56.84" fill="#4bb2e6"/><rect x="544.50" y="367.11" width="66.80" height="33.75" fill="#4f50d0"/><rect x="544.50" y="323.06" width="66.80" height="44.05" fill="#f07a6d"/><rect x="544.50" y="313.77" width="66.80" height="9.29" fill="#f3b40a"/><line x1="726.4" y1="293.5" x2="1336.3" y2="293.5" stroke="#a6dbee" stroke-width="1"/><line x1="726.4" y1="316.5" x2="1336.3" y2="316.5" stroke="#a6dbee" stroke-width="1"/><line x1="726.4" y1="340.5" x2="1336.3" y2="340.5" stroke="#a6dbee" stroke-width="1"/><line x1="726.4" y1="363.5" x2="1336.3" y2="363.5" stroke="#a6dbee" stroke-width="1"/><line x1="726.4" y1="386.5" x2="1336.3" y2="386.5" stroke="#a6dbee" stroke-width="1"/><line x1="726.4" y1="410.5" x2="1336.3" y2="410.5" stroke="#a6dbee" stroke-width="1"/><line x1="726.4" y1="433.5" x2="1336.3" y2="433.5" stroke="#a6dbee" stroke-width="1"/><line x1="726.4" y1="456.5" x2="1336.3" y2="456.5" stroke="#a6dbee" stroke-width="1"/><path d="M726.40 456.35 L736.74 456.32 L747.07 456.30 L757.41 456.27 L767.75 456.24 L778.09 456.22 L788.42 456.19 L798.76 456.17 L809.10 456.14 L819.44 456.11 L829.77 456.09 L840.11 456.06 L850.45 452.62 L860.78 452.51 L871.12 452.39 L881.46 452.27 L891.80 452.16 L902.13 452.04 L912.47 451.92 L922.81 451.81 L933.15 451.69 L943.48 451.57 L953.82 451.46 L964.16 451.34 L974.49 442.95 L984.83 442.24 L995.17 441.53 L1005.51 440.82 L1015.84 440.11 L1026.18 439.41 L1036.52 438.70 L1046.86 437.99 L1057.19 437.28 L1067.53 436.57 L1077.87 435.86 L1088.21 435.15 L1098.54 416.16 L1108.88 414.09 L1119.22 412.03 L1129.55 409.96 L1139.89 407.90 L1150.23 405.83 L1160.57 403.77 L1170.90 401.70 L1181.24 399.64 L1191.58 397.57 L1201.92 395.51 L1212.25 393.44 L1222.59 357.68 L1232.93 354.13 L1243.26 350.58 L1253.60 347.03 L1263.94 343.48 L1274.28 339.94 L1284.61 336.39 L1294.95 332.84 L1305.29 329.29 L1315.63 325.74 L1325.96 322.20 L1336.30 318.65 L1336.30 456.70 L726.40 456.70Z" fill="#f3b40a"/><path d="M726.40 456.41 L736.74 456.38 L747.07 456.36 L757.41 456.33 L767.75 456.30 L778.09 456.28 L788.42 456.25 L798.76 456.22 L809.10 456.20 L819.44 456.17 L829.77 456.14 L840.11 456.12 L850.45 452.97 L860.78 452.89 L871.12 452.80 L881.46 452.72 L891.80 452.63 L902.13 452.55 L912.47 452.46 L922.81 452.38 L933.15 452.29 L943.48 452.21 L953.82 452.12 L964.16 452.04 L974.49 443.77 L984.83 443.06 L995.17 442.35 L1005.51 441.64 L1015.84 440.93 L1026.18 440.22 L1036.52 439.51 L1046.86 438.80 L1057.19 438.09 L1067.53 437.38 L1077.87 436.67 L1088.21 435.96 L1098.54 418.72 L1108.88 416.83 L1119.22 414.93 L1129.55 413.03 L1139.89 411.14 L1150.23 409.24 L1160.57 407.35 L1170.90 405.45 L1181.24 403.55 L1191.58 401.66 L1201.92 399.76 L1212.25 397.87 L1222.59 362.92 L1232.93 359.72 L1243.26 356.52 L1253.60 353.32 L1263.94 350.12 L1274.28 346.93 L1284.61 343.73 L1294.95 340.53 L1305.29 337.33 L1315.63 334.13 L1325.96 330.93 L1336.30 327.73 L1336.30 456.70 L726.40 456.70Z" fill="#f07a6d"/><path d="M726.40 456.53 L736.74 456.50 L747.07 456.47 L757.41 456.45 L767.75 456.42 L778.09 456.39 L788.42 456.37 L798.76 456.34 L809.10 456.31 L819.44 456.29 L829.77 456.26 L840.11 456.23 L850.45 454.37 L860.78 454.29 L871.12 454.20 L881.46 454.12 L891.80 454.03 L902.13 453.95 L912.47 453.86 L922.81 453.78 L933.15 453.69 L943.48 453.61 L953.82 453.52 L964.16 453.44 L974.49 448.08 L984.83 447.61 L995.17 447.15 L1005.51 446.68 L1015.84 446.21 L1026.18 445.75 L1036.52 445.28 L1046.86 444.82 L1057.19 444.35 L1067.53 443.88 L1077.87 443.42 L1088.21 442.95 L1098.54 430.72 L1108.88 429.51 L1119.22 428.31 L1129.55 427.10 L1139.89 425.89 L1150.23 424.68 L1160.57 423.48 L1170.90 422.27 L1181.24 421.06 L1191.58 419.85 L1201.92 418.65 L1212.25 417.44 L1222.59 394.72 L1232.93 392.47 L1243.26 390.21 L1253.60 387.95 L1263.94 385.70 L1274.28 383.44 L1284.61 381.19 L1294.95 378.93 L1305.29 376.68 L1315.63 374.42 L1325.96 372.16 L1336.30 369.91 L1336.30 456.70 L726.40 456.70Z" fill="#4f50d0"/><path d="M726.40 456.58 L736.74 456.56 L747.07 456.54 L757.41 456.52 L767.75 456.50 L778.09 456.48 L788.42 456.46 L798.76 456.44 L809.10 456.41 L819.44 456.39 L829.77 456.37 L840.11 456.35 L850.45 455.07 L860.78 455.02 L871.12 454.96 L881.46 454.91 L891.80 454.86 L902.13 454.80 L912.47 454.75 L922.81 454.70 L933.15 454.65 L943.48 454.59 L953.82 454.54 L964.16 454.49 L974.49 450.76 L984.83 450.51 L995.17 450.27 L1005.51 450.03 L1015.84 449.78 L1026.18 449.54 L1036.52 449.30 L1046.86 449.05 L1057.19 448.81 L1067.53 448.57 L1077.87 448.32 L1088.21 448.08 L1098.54 440.86 L1108.88 440.02 L1119.22 439.18 L1129.55 438.35 L1139.89 437.51 L1150.23 436.67 L1160.57 435.84 L1170.90 435.00 L1181.24 434.16 L1191.58 433.33 L1201.92 432.49 L1212.25 431.65 L1222.59 417.56 L1232.93 416.19 L1243.26 414.82 L1253.60 413.46 L1263.94 412.09 L1274.28 410.72 L1284.61 409.36 L1294.95 407.99 L1305.29 406.63 L1315.63 405.26 L1325.96 403.89 L1336.30 402.53 L1336.30 456.70 L726.40 456.70Z" fill="#4bb2e6"/><line x1="87.9" y1="548.5" x2="629.1" y2="548.5" stroke="#a6dbee" stroke-width="1"/><line x1="87.9" y1="581.5" x2="629.1" y2="581.5" stroke="#a6dbee" stroke-width="1"/><line x1="87.9" y1="614.5" x2="629.1" y2="614.5" stroke="#a6dbee" stroke-width="1"/><line x1="87.9" y1="646.5" x2="629.1" y2="646.5" stroke="#a6dbee" stroke-width="1"/><line x1="87.9" y1="679.5" x2="629.1" y2="679.5" stroke="#a6dbee" stroke-width="1"/><line x1="87.9" y1="712.5" x2="629.1" y2="712.5" stroke="#a6dbee" stroke-width="1"/><rect x="109.20" y="731.99" width="67.40" height="13.41" fill="#4bb2e6"/><rect x="217.44" y="731.99" width="67.40" height="13.41" fill="#4bb2e6"/><rect x="325.68" y="721.89" width="67.40" height="23.51" fill="#4bb2e6"/><rect x="433.92" y="679.27" width="67.40" height="66.13" fill="#4bb2e6"/><rect x="542.16" y="567.91" width="67.40" height="177.49" fill="#4bb2e6"/><line x1="87.9" y1="745.4" x2="629.1" y2="745.4" stroke="#4a78d0" stroke-width="1.2"/><line x1="87.9" y1="745.4" x2="87.9" y2="748.9" stroke="#4a78d0" stroke-width="1"/><line x1="142.02" y1="745.4" x2="142.02" y2="747.9" stroke="#4a78d0" stroke-width="1"/><line x1="196.14000000000001" y1="745.4" x2="196.14000000000001" y2="748.9" stroke="#4a78d0" stroke-width="1"/><line x1="250.26000000000002" y1="745.4" x2="250.26000000000002" y2="747.9" stroke="#4a78d0" stroke-width="1"/><line x1="304.38" y1="745.4" x2="304.38" y2="748.9" stroke="#4a78d0" stroke-width="1"/><line x1="358.5" y1="745.4" x2="358.5" y2="747.9" stroke="#4a78d0" stroke-width="1"/><line x1="412.62" y1="745.4" x2="412.62" y2="748.9" stroke="#4a78d0" stroke-width="1"/><line x1="466.74" y1="745.4" x2="466.74" y2="747.9" stroke="#4a78d0" stroke-width="1"/><line x1="520.86" y1="745.4" x2="520.86" y2="748.9" stroke="#4a78d0" stroke-width="1"/><line x1="574.98" y1="745.4" x2="574.98" y2="747.9" stroke="#4a78d0" stroke-width="1"/><line x1="629.1" y1="745.4" x2="629.1" y2="748.9" stroke="#4a78d0" stroke-width="1"/><line x1="732.2" y1="549.5" x2="1336.1" y2="549.5" stroke="#a6dbee" stroke-width="1"/><line x1="732.2" y1="582.5" x2="1336.1" y2="582.5" stroke="#a6dbee" stroke-width="1"/><line x1="732.2" y1="614.5" x2="1336.1" y2="614.5" stroke="#a6dbee" stroke-width="1"/><line x1="732.2" y1="647.5" x2="1336.1" y2="647.5" stroke="#a6dbee" stroke-width="1"/><line x1="732.2" y1="680.5" x2="1336.1" y2="680.5" stroke="#a6dbee" stroke-width="1"/><line x1="732.2" y1="712.5" x2="1336.1" y2="712.5" stroke="#a6dbee" stroke-width="1"/><path d="M732.20 731.03 L742.44 731.35 L752.67 730.04 L762.91 730.62 L773.14 730.89 L783.38 731.16 L793.61 731.44 L803.85 731.66 L814.08 731.89 L824.32 732.12 L834.56 732.22 L844.79 732.33 L855.03 732.43 L865.26 732.56 L875.50 732.69 L885.73 732.82 L895.97 732.82 L906.21 732.82 L916.44 732.82 L926.68 732.69 L936.91 732.56 L947.15 732.43 L957.38 732.33 L967.62 732.22 L977.85 732.12 L988.09 731.43 L998.33 730.73 L1008.56 730.04 L1018.80 729.40 L1029.03 728.77 L1039.27 728.13 L1049.50 726.70 L1059.74 725.27 L1069.97 723.84 L1080.21 722.51 L1090.45 721.18 L1100.68 719.85 L1110.92 717.19 L1121.15 714.53 L1131.39 711.87 L1141.62 708.28 L1151.86 704.69 L1162.09 701.10 L1172.33 696.87 L1182.57 692.64 L1192.80 688.41 L1203.04 683.26 L1213.27 678.11 L1223.51 672.96 L1233.74 664.91 L1243.98 656.85 L1254.22 648.80 L1264.45 638.99 L1274.69 629.17 L1284.92 619.36 L1295.16 609.38 L1305.39 599.40 L1315.63 589.42 L1325.86 579.45 L1336.10 569.47 L1336.10 745.10 L732.20 745.10Z" fill="#4bb2e6"/><line x1="732.2" y1="745.1" x2="1336.1" y2="745.1" stroke="#4a78d0" stroke-width="1.2"/><line x1="732.2" y1="745.1" x2="732.2" y2="747.6" stroke="#4a78d0" stroke-width="1"/><line x1="742.435593220339" y1="745.1" x2="742.435593220339" y2="747.6" stroke="#4a78d0" stroke-width="1"/><line x1="752.671186440678" y1="745.1" x2="752.671186440678" y2="747.6" stroke="#4a78d0" stroke-width="1"/><line x1="762.906779661017" y1="745.1" x2="762.906779661017" y2="747.6" stroke="#4a78d0" stroke-width="1"/><line x1="773.142372881356" y1="745.1" x2="773.142372881356" y2="747.6" stroke="#4a78d0" stroke-width="1"/><line x1="783.3779661016949" y1="745.1" x2="783.3779661016949" y2="747.6" stroke="#4a78d0" stroke-width="1"/><line x1="793.6135593220339" y1="745.1" x2="793.6135593220339" y2="747.6" stroke="#4a78d0" stroke-width="1"/><line x1="803.8491525423728" y1="745.1" x2="803.8491525423728" y2="747.6" stroke="#4a78d0" stroke-width="1"/><line x1="814.0847457627119" y1="745.1" x2="814.0847457627119" y2="747.6" stroke="#4a78d0" stroke-width="1"/><line x1="824.3203389830509" y1="745.1" x2="824.3203389830509" y2="747.6" stroke="#4a78d0" stroke-width="1"/><line x1="834.5559322033898" y1="745.1" x2="834.5559322033898" y2="747.6" stroke="#4a78d0" stroke-width="1"/><line x1="844.7915254237288" y1="745.1" x2="844.7915254237288" y2="747.6" stroke="#4a78d0" stroke-width="1"/><line x1="855.0271186440679" y1="745.1" x2="855.0271186440679" y2="747.6" stroke="#4a78d0" stroke-width="1"/><line x1="865.2627118644068" y1="745.1" x2="865.2627118644068" y2="747.6" stroke="#4a78d0" stroke-width="1"/><line x1="875.4983050847458" y1="745.1" x2="875.4983050847458" y2="747.6" stroke="#4a78d0" stroke-width="1"/><line x1="885.7338983050847" y1="745.1" x2="885.7338983050847" y2="747.6" stroke="#4a78d0" stroke-width="1"/><line x1="895.9694915254238" y1="745.1" x2="895.9694915254238" y2="747.6" stroke="#4a78d0" stroke-width="1"/><line x1="906.2050847457627" y1="745.1" x2="906.2050847457627" y2="747.6" stroke="#4a78d0" stroke-width="1"/><line x1="916.4406779661017" y1="745.1" x2="916.4406779661017" y2="747.6" stroke="#4a78d0" stroke-width="1"/><line x1="926.6762711864407" y1="745.1" x2="926.6762711864407" y2="747.6" stroke="#4a78d0" stroke-width="1"/><line x1="936.9118644067796" y1="745.1" x2="936.9118644067796" y2="747.6" stroke="#4a78d0" stroke-width="1"/><line x1="947.1474576271187" y1="745.1" x2="947.1474576271187" y2="747.6" stroke="#4a78d0" stroke-width="1"/><line x1="957.3830508474576" y1="745.1" x2="957.3830508474576" y2="747.6" stroke="#4a78d0" stroke-width="1"/><line x1="967.6186440677966" y1="745.1" x2="967.6186440677966" y2="747.6" stroke="#4a78d0" stroke-width="1"/><line x1="977.8542372881356" y1="745.1" x2="977.8542372881356" y2="747.6" stroke="#4a78d0" stroke-width="1"/><line x1="988.0898305084745" y1="745.1" x2="988.0898305084745" y2="747.6" stroke="#4a78d0" stroke-width="1"/><line x1="998.3254237288136" y1="745.1" x2="998.3254237288136" y2="747.6" stroke="#4a78d0" stroke-width="1"/><line x1="1008.5610169491525" y1="745.1" x2="1008.5610169491525" y2="747.6" stroke="#4a78d0" stroke-width="1"/><line x1="1018.7966101694915" y1="745.1" x2="1018.7966101694915" y2="747.6" stroke="#4a78d0" stroke-width="1"/><line x1="1029.0322033898306" y1="745.1" x2="1029.0322033898306" y2="747.6" stroke="#4a78d0" stroke-width="1"/><line x1="1039.2677966101694" y1="745.1" x2="1039.2677966101694" y2="747.6" stroke="#4a78d0" stroke-width="1"/><line x1="1049.5033898305085" y1="745.1" x2="1049.5033898305085" y2="747.6" stroke="#4a78d0" stroke-width="1"/><line x1="1059.7389830508473" y1="745.1" x2="1059.7389830508473" y2="747.6" stroke="#4a78d0" stroke-width="1"/><line x1="1069.9745762711864" y1="745.1" x2="1069.9745762711864" y2="747.6" stroke="#4a78d0" stroke-width="1"/><line x1="1080.2101694915254" y1="745.1" x2="1080.2101694915254" y2="747.6" stroke="#4a78d0" stroke-width="1"/><line x1="1090.4457627118643" y1="745.1" x2="1090.4457627118643" y2="747.6" stroke="#4a78d0" stroke-width="1"/><line x1="1100.6813559322034" y1="745.1" x2="1100.6813559322034" y2="747.6" stroke="#4a78d0" stroke-width="1"/><line x1="1110.9169491525422" y1="745.1" x2="1110.9169491525422" y2="747.6" stroke="#4a78d0" stroke-width="1"/><line x1="1121.1525423728813" y1="745.1" x2="1121.1525423728813" y2="747.6" stroke="#4a78d0" stroke-width="1"/><line x1="1131.3881355932203" y1="745.1" x2="1131.3881355932203" y2="747.6" stroke="#4a78d0" stroke-width="1"/><line x1="1141.6237288135594" y1="745.1" x2="1141.6237288135594" y2="747.6" stroke="#4a78d0" stroke-width="1"/><line x1="1151.8593220338983" y1="745.1" x2="1151.8593220338983" y2="747.6" stroke="#4a78d0" stroke-width="1"/><line x1="1162.094915254237" y1="745.1" x2="1162.094915254237" y2="747.6" stroke="#4a78d0" stroke-width="1"/><line x1="1172.3305084745762" y1="745.1" x2="1172.3305084745762" y2="747.6" stroke="#4a78d0" stroke-width="1"/><line x1="1182.5661016949152" y1="745.1" x2="1182.5661016949152" y2="747.6" stroke="#4a78d0" stroke-width="1"/><line x1="1192.8016949152543" y1="745.1" x2="1192.8016949152543" y2="747.6" stroke="#4a78d0" stroke-width="1"/><line x1="1203.0372881355931" y1="745.1" x2="1203.0372881355931" y2="747.6" stroke="#4a78d0" stroke-width="1"/><line x1="1213.2728813559322" y1="745.1" x2="1213.2728813559322" y2="747.6" stroke="#4a78d0" stroke-width="1"/><line x1="1223.508474576271" y1="745.1" x2="1223.508474576271" y2="747.6" stroke="#4a78d0" stroke-width="1"/><line x1="1233.7440677966101" y1="745.1" x2="1233.7440677966101" y2="747.6" stroke="#4a78d0" stroke-width="1"/><line x1="1243.9796610169492" y1="745.1" x2="1243.9796610169492" y2="747.6" stroke="#4a78d0" stroke-width="1"/><line x1="1254.215254237288" y1="745.1" x2="1254.215254237288" y2="747.6" stroke="#4a78d0" stroke-width="1"/><line x1="1264.4508474576269" y1="745.1" x2="1264.4508474576269" y2="747.6" stroke="#4a78d0" stroke-width="1"/><line x1="1274.686440677966" y1="745.1" x2="1274.686440677966" y2="747.6" stroke="#4a78d0" stroke-width="1"/><line x1="1284.922033898305" y1="745.1" x2="1284.922033898305" y2="747.6" stroke="#4a78d0" stroke-width="1"/><line x1="1295.157627118644" y1="745.1" x2="1295.157627118644" y2="747.6" stroke="#4a78d0" stroke-width="1"/><line x1="1305.393220338983" y1="745.1" x2="1305.393220338983" y2="747.6" stroke="#4a78d0" stroke-width="1"/><line x1="1315.6288135593218" y1="745.1" x2="1315.6288135593218" y2="747.6" stroke="#4a78d0" stroke-width="1"/><line x1="1325.8644067796608" y1="745.1" x2="1325.8644067796608" y2="747.6" stroke="#4a78d0" stroke-width="1"/><line x1="1336.1" y1="745.1" x2="1336.1" y2="747.6" stroke="#4a78d0" stroke-width="1"/><line x1="1336.1" y1="745.1" x2="1336.1" y2="747.6" stroke="#4a78d0" stroke-width="1"/><text x="0" y="0" text-anchor="end" font-family="Liberation Sans" font-size="9.4" fill="#1a1a1a" transform="translate(728.90,470.50) rotate(-45)">Jan-26</text><text x="0" y="0" text-anchor="end" font-family="Liberation Sans" font-size="9.4" fill="#1a1a1a" transform="translate(749.57,470.50) rotate(-45)">Mar-26</text><text x="0" y="0" text-anchor="end" font-family="Liberation Sans" font-size="9.4" fill="#1a1a1a" transform="translate(770.25,470.50) rotate(-45)">May-26</text><text x="0" y="0" text-anchor="end" font-family="Liberation Sans" font-size="9.4" fill="#1a1a1a" transform="translate(790.92,470.50) rotate(-45)">Jul-26</text><text x="0" y="0" text-anchor="end" font-family="Liberation Sans" font-size="9.4" fill="#1a1a1a" transform="translate(811.60,470.50) rotate(-45)">Sep-26</text><text x="0" y="0" text-anchor="end" font-family="Liberation Sans" font-size="9.4" fill="#1a1a1a" transform="translate(832.27,470.50) rotate(-45)">Nov-26</text><text x="0" y="0" text-anchor="end" font-family="Liberation Sans" font-size="9.4" fill="#1a1a1a" transform="translate(852.95,470.50) rotate(-45)">Jan-27</text><text x="0" y="0" text-anchor="end" font-family="Liberation Sans" font-size="9.4" fill="#1a1a1a" transform="translate(873.62,470.50) rotate(-45)">Mar-27</text><text x="0" y="0" text-anchor="end" font-family="Liberation Sans" font-size="9.4" fill="#1a1a1a" transform="translate(894.30,470.50) rotate(-45)">May-27</text><text x="0" y="0" text-anchor="end" font-family="Liberation Sans" font-size="9.4" fill="#1a1a1a" transform="translate(914.97,470.50) rotate(-45)">Jul-27</text><text x="0" y="0" text-anchor="end" font-family="Liberation Sans" font-size="9.4" fill="#1a1a1a" transform="translate(935.65,470.50) rotate(-45)">Sep-27</text><text x="0" y="0" text-anchor="end" font-family="Liberation Sans" font-size="9.4" fill="#1a1a1a" transform="translate(956.32,470.50) rotate(-45)">Nov-27</text><text x="0" y="0" text-anchor="end" font-family="Liberation Sans" font-size="9.4" fill="#1a1a1a" transform="translate(976.99,470.50) rotate(-45)">Jan-28</text><text x="0" y="0" text-anchor="end" font-family="Liberation Sans" font-size="9.4" fill="#1a1a1a" transform="translate(997.67,470.50) rotate(-45)">Mar-28</text><text x="0" y="0" text-anchor="end" font-family="Liberation Sans" font-size="9.4" fill="#1a1a1a" transform="translate(1018.34,470.50) rotate(-45)">May-28</text><text x="0" y="0" text-anchor="end" font-family="Liberation Sans" font-size="9.4" fill="#1a1a1a" transform="translate(1039.02,470.50) rotate(-45)">Jul-28</text><text x="0" y="0" text-anchor="end" font-family="Liberation Sans" font-size="9.4" fill="#1a1a1a" transform="translate(1059.69,470.50) rotate(-45)">Sep-28</text><text x="0" y="0" text-anchor="end" font-family="Liberation Sans" font-size="9.4" fill="#1a1a1a" transform="translate(1080.37,470.50) rotate(-45)">Nov-28</text><text x="0" y="0" text-anchor="end" font-family="Liberation Sans" font-size="9.4" fill="#1a1a1a" transform="translate(1101.04,470.50) rotate(-45)">Jan-29</text><text x="0" y="0" text-anchor="end" font-family="Liberation Sans" font-size="9.4" fill="#1a1a1a" transform="translate(1121.72,470.50) rotate(-45)">Mar-29</text><text x="0" y="0" text-anchor="end" font-family="Liberation Sans" font-size="9.4" fill="#1a1a1a" transform="translate(1142.39,470.50) rotate(-45)">May-29</text><text x="0" y="0" text-anchor="end" font-family="Liberation Sans" font-size="9.4" fill="#1a1a1a" transform="translate(1163.07,470.50) rotate(-45)">Jul-29</text><text x="0" y="0" text-anchor="end" font-family="Liberation Sans" font-size="9.4" fill="#1a1a1a" transform="translate(1183.74,470.50) rotate(-45)">Sep-29</text><text x="0" y="0" text-anchor="end" font-family="Liberation Sans" font-size="9.4" fill="#1a1a1a" transform="translate(1204.42,470.50) rotate(-45)">Nov-29</text><text x="0" y="0" text-anchor="end" font-family="Liberation Sans" font-size="9.4" fill="#1a1a1a" transform="translate(1225.09,470.50) rotate(-45)">Jan-30</text><text x="0" y="0" text-anchor="end" font-family="Liberation Sans" font-size="9.4" fill="#1a1a1a" transform="translate(1245.76,470.50) rotate(-45)">Mar-30</text><text x="0" y="0" text-anchor="end" font-family="Liberation Sans" font-size="9.4" fill="#1a1a1a" transform="translate(1266.44,470.50) rotate(-45)">May-30</text><text x="0" y="0" text-anchor="end" font-family="Liberation Sans" font-size="9.4" fill="#1a1a1a" transform="translate(1287.11,470.50) rotate(-45)">Jul-30</text><text x="0" y="0" text-anchor="end" font-family="Liberation Sans" font-size="9.4" fill="#1a1a1a" transform="translate(1307.79,470.50) rotate(-45)">Sep-30</text><text x="0" y="0" text-anchor="end" font-family="Liberation Sans" font-size="9.4" fill="#1a1a1a" transform="translate(1328.46,470.50) rotate(-45)">Nov-30</text><text x="0" y="0" text-anchor="end" font-family="Liberation Sans" font-size="9.4" fill="#1a1a1a" transform="translate(734.70,758.50) rotate(-45)">Jan-26</text><text x="0" y="0" text-anchor="end" font-family="Liberation Sans" font-size="9.4" fill="#1a1a1a" transform="translate(765.41,758.50) rotate(-45)">Apr-26</text><text x="0" y="0" text-anchor="end" font-family="Liberation Sans" font-size="9.4" fill="#1a1a1a" transform="translate(796.11,758.50) rotate(-45)">Jul-26</text><text x="0" y="0" text-anchor="end" font-family="Liberation Sans" font-size="9.4" fill="#1a1a1a" transform="translate(826.82,758.50) rotate(-45)">Oct-26</text><text x="0" y="0" text-anchor="end" font-family="Liberation Sans" font-size="9.4" fill="#1a1a1a" transform="translate(857.53,758.50) rotate(-45)">Jan-27</text><text x="0" y="0" text-anchor="end" font-family="Liberation Sans" font-size="9.4" fill="#1a1a1a" transform="translate(888.23,758.50) rotate(-45)">Apr-27</text><text x="0" y="0" text-anchor="end" font-family="Liberation Sans" font-size="9.4" fill="#1a1a1a" transform="translate(918.94,758.50) rotate(-45)">Jul-27</text><text x="0" y="0" text-anchor="end" font-family="Liberation Sans" font-size="9.4" fill="#1a1a1a" transform="translate(949.65,758.50) rotate(-45)">Oct-27</text><text x="0" y="0" text-anchor="end" font-family="Liberation Sans" font-size="9.4" fill="#1a1a1a" transform="translate(980.35,758.50) rotate(-45)">Jan-28</text><text x="0" y="0" text-anchor="end" font-family="Liberation Sans" font-size="9.4" fill="#1a1a1a" transform="translate(1011.06,758.50) rotate(-45)">Apr-28</text><text x="0" y="0" text-anchor="end" font-family="Liberation Sans" font-size="9.4" fill="#1a1a1a" transform="translate(1041.77,758.50) rotate(-45)">Jul-28</text><text x="0" y="0" text-anchor="end" font-family="Liberation Sans" font-size="9.4" fill="#1a1a1a" transform="translate(1072.47,758.50) rotate(-45)">Oct-28</text><text x="0" y="0" text-anchor="end" font-family="Liberation Sans" font-size="9.4" fill="#1a1a1a" transform="translate(1103.18,758.50) rotate(-45)">Jan-29</text><text x="0" y="0" text-anchor="end" font-family="Liberation Sans" font-size="9.4" fill="#1a1a1a" transform="translate(1133.89,758.50) rotate(-45)">Apr-29</text><text x="0" y="0" text-anchor="end" font-family="Liberation Sans" font-size="9.4" fill="#1a1a1a" transform="translate(1164.59,758.50) rotate(-45)">Jul-29</text><text x="0" y="0" text-anchor="end" font-family="Liberation Sans" font-size="9.4" fill="#1a1a1a" transform="translate(1195.30,758.50) rotate(-45)">Oct-29</text><text x="0" y="0" text-anchor="end" font-family="Liberation Sans" font-size="9.4" fill="#1a1a1a" transform="translate(1226.01,758.50) rotate(-45)">Jan-30</text><text x="0" y="0" text-anchor="end" font-family="Liberation Sans" font-size="9.4" fill="#1a1a1a" transform="translate(1256.72,758.50) rotate(-45)">Apr-30</text><text x="0" y="0" text-anchor="end" font-family="Liberation Sans" font-size="9.4" fill="#1a1a1a" transform="translate(1287.42,758.50) rotate(-45)">Jul-30</text><text x="0" y="0" text-anchor="end" font-family="Liberation Sans" font-size="9.4" fill="#1a1a1a" transform="translate(1318.13,758.50) rotate(-45)">Oct-30</text></svg><div style="position:absolute;left:5.5px;top:800px;width:1377.9px;height:23px;background:#0d0d0d;"></div><div style="position:absolute;left:5.5px;top:800px;width:1377.9px;height:0.8px;background:#1c1c1c;"></div><svg style="position:absolute;left:21px;top:807px" width="6" height="10"><path d="M5 1 L1 5 L5 9" stroke="#9a9a9a" stroke-width="1.1" fill="none"/></svg><svg style="position:absolute;left:45px;top:807px" width="6" height="10"><path d="M1 1 L5 5 L1 9" stroke="#bdbdbd" stroke-width="1.1" fill="none"/></svg><div style="position:absolute;left:139.5px;top:805px;width:1px;height:15px;background:#3a3a3a;"></div><div style="position:absolute;left:143.3px;top:803.2px;width:61.29999999999998px;height:17px;background:#f8e866;border-radius:3px;"></div><div style="position:absolute;left:207.29999999999998px;top:805px;width:1px;height:15px;background:#3a3a3a;"></div><div style="position:absolute;left:210.6px;top:803.2px;width:50.20000000000002px;height:17px;background:#f8e866;border-radius:3px;"></div><div style="position:absolute;left:263.5px;top:805px;width:1px;height:15px;background:#3a3a3a;"></div><div style="position:absolute;left:267.5px;top:803.2px;width:75.5px;height:17px;background:#f8e866;border-radius:3px;"></div><div style="position:absolute;left:345.7px;top:805px;width:1px;height:15px;background:#3a3a3a;"></div><div style="position:absolute;left:349.8px;top:803.2px;width:41.89999999999998px;height:17px;background:#f8e866;border-radius:3px;"></div><div style="position:absolute;left:394.4px;top:805px;width:1px;height:15px;background:#3a3a3a;"></div><div style="position:absolute;left:398.4px;top:803.2px;width:41.900000000000034px;height:17px;background:#f8e866;border-radius:3px;"></div><div style="position:absolute;left:443.0px;top:805px;width:1px;height:15px;background:#3a3a3a;"></div><div style="position:absolute;left:446.3px;top:803.2px;width:53.89999999999998px;height:17px;background:#f8e866;border-radius:3px;"></div><div style="position:absolute;left:502.9px;top:805px;width:1px;height:15px;background:#3a3a3a;"></div><div style="position:absolute;left:507.3px;top:803.2px;width:43.099999999999966px;height:17px;background:#f8e866;border-radius:3px;"></div><div style="position:absolute;left:553.1px;top:805px;width:1px;height:15px;background:#3a3a3a;"></div><div style="position:absolute;left:556.4px;top:803.2px;width:19.300000000000068px;height:17px;background:#4fb3e7;border-radius:3px;"></div><div style="position:absolute;left:578.4000000000001px;top:805px;width:1px;height:15px;background:#3a3a3a;"></div><div style="position:absolute;left:582.6px;top:803.2px;width:23.0px;height:17px;background:#4fb3e7;border-radius:3px;"></div><div style="position:absolute;left:608.3000000000001px;top:805px;width:1px;height:15px;background:#3a3a3a;"></div><div style="position:absolute;left:611.6px;top:803.2px;width:23.399999999999977px;height:17px;background:#4fb3e7;border-radius:3px;"></div><div style="position:absolute;left:637.7px;top:805px;width:1px;height:15px;background:#3a3a3a;"></div><div style="position:absolute;left:641px;top:803.2px;width:55.200000000000045px;height:17px;background:#4fb3e7;border-radius:3px;"></div><div style="position:absolute;left:698.9000000000001px;top:805px;width:1px;height:15px;background:#3a3a3a;"></div><div style="position:absolute;left:702.3px;top:803.2px;width:54.700000000000045px;height:17px;background:#4fb3e7;border-radius:3px;"></div><div style="position:absolute;left:759.7px;top:805px;width:1px;height:15px;background:#3a3a3a;"></div><div style="position:absolute;left:763.9px;top:803.2px;width:54.39999999999998px;height:17px;background:#4fb3e7;border-radius:3px;"></div><div style="position:absolute;left:821.0px;top:805px;width:1px;height:15px;background:#3a3a3a;"></div><div style="position:absolute;left:824.3px;top:803.2px;width:23.0px;height:17px;background:#4fb3e7;border-radius:3px;"></div><div style="position:absolute;left:850.0px;top:805px;width:1px;height:15px;background:#3a3a3a;"></div><div style="position:absolute;left:853.3px;top:803.2px;width:35.5px;height:17px;background:#4fb3e7;border-radius:3px;"></div><div style="position:absolute;left:891.5px;top:805px;width:1px;height:15px;background:#3a3a3a;"></div><div style="position:absolute;left:942px;top:803.2px;width:30.200000000000045px;height:17px;background:#4fb3e7;border-radius:3px;"></div><div style="position:absolute;left:974.9000000000001px;top:805px;width:1px;height:15px;background:#3a3a3a;"></div><div style="position:absolute;left:978.6px;top:803.2px;width:14px;height:17px;background:#4fb3e7;border-radius:3px 0 0 3px;"></div><div style="position:absolute;left:992.6px;top:800.8px;width:75px;height:22px;background:#0d0d0d;"></div><div style="position:absolute;left:894px;top:799.5px;width:41.5px;height:20.5px;border-radius:0 0 4px 4px;background:linear-gradient(#ffffff 30%,#d6ecf8)"></div><div style="position:absolute;left:900px;top:816.2px;width:29.5px;height:1.6px;background:#1e8a4a;"></div><div style="position:absolute;left:999px;top:810.2px;width:2.4px;height:2.4px;background:#f0f0f0;border-radius:50%;"></div><div style="position:absolute;left:1002.4px;top:810.2px;width:2.4px;height:2.4px;background:#f0f0f0;border-radius:50%;"></div><div style="position:absolute;left:1005.8px;top:810.2px;width:2.4px;height:2.4px;background:#f0f0f0;border-radius:50%;"></div><div style="position:absolute;left:1021.5px;top:811px;width:9px;height:1.1px;background:#e0e0e0;"></div><div style="position:absolute;left:1025.5px;top:807px;width:1.1px;height:9px;background:#e0e0e0;"></div><div style="position:absolute;left:1049px;top:807.3px;width:1.8px;height:1.8px;background:#cfcfcf;border-radius:50%;"></div><div style="position:absolute;left:1049px;top:810.6999999999999px;width:1.8px;height:1.8px;background:#cfcfcf;border-radius:50%;"></div><div style="position:absolute;left:1049px;top:814.0999999999999px;width:1.8px;height:1.8px;background:#cfcfcf;border-radius:50%;"></div><svg style="position:absolute;left:1064px;top:807px" width="7" height="8"><path d="M6.5 0.5 V7.5 L0.5 4 Z" fill="#9a9a9a"/></svg><div style="position:absolute;left:1074px;top:808.5px;width:268.2px;height:5.2px;background:#8c8c8c;border-radius:3px;"></div><svg style="position:absolute;left:1360.5px;top:807px" width="7" height="8"><path d="M0.5 0.5 V7.5 L6.5 4 Z" fill="#9a9a9a"/></svg><div style="position:absolute;left:5.5px;top:823px;width:1377.9px;height:15.5px;background:#161616;"></div><div style="position:absolute;left:5.5px;top:822.6px;width:1377.9px;height:0.8px;background:#1f1f1f;"></div><svg style="position:absolute;left:46.5px;top:825.5px" width="12" height="11" viewBox="0 0 12 11"><rect x="0.5" y="0.5" width="9" height="9" stroke="#bbb" stroke-width="0.9" fill="none"/><path d="M0.5 3 H9.5 M3 0.5 V9.5" stroke="#bbb" stroke-width="0.8"/><circle cx="8" cy="7" r="3.2" fill="#181818" stroke="#ddd" stroke-width="0.9"/><circle cx="8" cy="7" r="1.2" fill="#ddd"/></svg><svg style="position:absolute;left:70px;top:825px" width="11" height="12" viewBox="0 0 11 12"><circle cx="5" cy="1.8" r="1.3" stroke="#ddd" stroke-width="0.9" fill="none"/><path d="M0.5 4 H9.5 M5 4 V7 L2 11 M5 7 L7 9.5 M7 7 L10.5 11 M10.5 7 L7 11" stroke="#ddd" stroke-width="0.9" fill="none"/></svg><div style="position:absolute;left:1171px;top:823.4px;width:29px;height:15.6px;background:#2a2a2a;"></div><svg style="position:absolute;left:1179px;top:826px" width="10" height="10" viewBox="0 0 10 10"><rect x="0.5" y="0.5" width="9" height="9" stroke="#ddd" stroke-width="1" fill="none"/><path d="M0.5 3.5 H9.5 M0.5 6.5 H9.5 M3.5 0.5 V9.5 M6.5 0.5 V9.5" stroke="#ddd" stroke-width="0.9"/></svg><svg style="position:absolute;left:1208.5px;top:826px" width="11" height="10" viewBox="0 0 11 10"><rect x="0.5" y="0.5" width="10" height="9" stroke="#ddd" stroke-width="1" fill="none"/><rect x="3" y="2" width="5" height="6" stroke="#ddd" stroke-width="0.9" fill="none"/></svg><svg style="position:absolute;left:1238px;top:826px" width="11" height="10" viewBox="0 0 11 10"><path d="M0.5 0.5 H10.5 V9.5 H0.5 Z M3.5 0.5 V5.5 H6.5 V0.5" stroke="#ddd" stroke-width="1" fill="none"/></svg><div style="position:absolute;left:1259.5px;top:831px;width:5px;height:1px;background:#cfcfcf;"></div><div style="position:absolute;left:1270.4px;top:830.8px;width:71.3px;height:1.2px;background:#9a9a9a;"></div><div style="position:absolute;left:1306px;top:826.8px;width:3px;height:9px;background:#cfcfcf;border-radius:1px;"></div><div style="position:absolute;left:1345.5px;top:831px;width:6px;height:1px;background:#cfcfcf;"></div><div style="position:absolute;left:1348px;top:828.5px;width:1px;height:6px;background:#cfcfcf;"></div>
<span style="position:absolute;left:45.50px;top:17.88px;white-space:nowrap;line-height:10.5px;font-size:10.5px;font-weight:normal;color:#e8e8e8;transform:scaleX(0.8192);transform-origin:0 0;">dropshipping.xlsx&nbsp; -&nbsp; Read-Only</span><span style="position:absolute;left:20.10px;top:47.02px;white-space:nowrap;line-height:10.2px;font-size:10.2px;font-weight:normal;color:#f0f0f0;transform:scaleX(0.8769);transform-origin:0 0;">File</span><span style="position:absolute;left:53.20px;top:47.02px;white-space:nowrap;line-height:10.2px;font-size:10.2px;font-weight:bold;color:#f0f0f0;transform:scaleX(0.9466);transform-origin:0 0;">Home</span><span style="position:absolute;left:95.00px;top:47.02px;white-space:nowrap;line-height:10.2px;font-size:10.2px;font-weight:normal;color:#f0f0f0;transform:scaleX(0.8790);transform-origin:0 0;">Insert</span><span style="position:absolute;left:133.00px;top:47.02px;white-space:nowrap;line-height:10.2px;font-size:10.2px;font-weight:normal;color:#f0f0f0;transform:scaleX(0.9041);transform-origin:0 0;">Draw</span><span style="position:absolute;left:169.20px;top:47.02px;white-space:nowrap;line-height:10.2px;font-size:10.2px;font-weight:normal;color:#f0f0f0;transform:scaleX(0.8808);transform-origin:0 0;">Page Layout</span><span style="position:absolute;left:235.40px;top:47.02px;white-space:nowrap;line-height:10.2px;font-size:10.2px;font-weight:normal;color:#f0f0f0;transform:scaleX(0.8948);transform-origin:0 0;">Formulas</span><span style="position:absolute;left:287.80px;top:47.02px;white-space:nowrap;line-height:10.2px;font-size:10.2px;font-weight:normal;color:#f0f0f0;transform:scaleX(0.8685);transform-origin:0 0;">Data</span><span style="position:absolute;left:321.40px;top:47.02px;white-space:nowrap;line-height:10.2px;font-size:10.2px;font-weight:normal;color:#f0f0f0;transform:scaleX(0.8621);transform-origin:0 0;">Review</span><span style="position:absolute;left:364.90px;top:47.02px;white-space:nowrap;line-height:10.2px;font-size:10.2px;font-weight:normal;color:#f0f0f0;transform:scaleX(0.9039);transform-origin:0 0;">View</span><span style="position:absolute;left:399.50px;top:47.02px;white-space:nowrap;line-height:10.2px;font-size:10.2px;font-weight:normal;color:#f0f0f0;transform:scaleX(0.9562);transform-origin:0 0;">Automate</span><span style="position:absolute;left:455.50px;top:47.02px;white-space:nowrap;line-height:10.2px;font-size:10.2px;font-weight:normal;color:#f0f0f0;transform:scaleX(0.9497);transform-origin:0 0;">Help</span><span style="position:absolute;left:1271.00px;top:46.22px;white-space:nowrap;line-height:10px;font-size:10px;font-weight:normal;color:#f0f0f0;transform:scaleX(0.9202);transform-origin:0 0;">Comments</span><span style="position:absolute;left:1340.40px;top:45.98px;white-space:nowrap;line-height:10.5px;font-size:10.5px;font-weight:normal;color:#0d0d0d;transform:scaleX(0.8562);transform-origin:0 0;">Share</span><span style="position:absolute;left:52.00px;top:121.80px;white-space:nowrap;line-height:8.6px;font-size:8.6px;font-weight:normal;color:#d8d8d8;transform:scaleX(0.8968);transform-origin:0 0;">Clipboard</span><span style="position:absolute;left:205.25px;top:121.80px;white-space:nowrap;line-height:8.6px;font-size:8.6px;font-weight:normal;color:#d8d8d8;transform:scaleX(0.9591);transform-origin:0 0;">Font</span><span style="position:absolute;left:386.30px;top:121.80px;white-space:nowrap;line-height:8.6px;font-size:8.6px;font-weight:normal;color:#d8d8d8;transform:scaleX(0.9943);transform-origin:0 0;">Alignment</span><span style="position:absolute;left:556.15px;top:121.80px;white-space:nowrap;line-height:8.6px;font-size:8.6px;font-weight:normal;color:#d8d8d8;transform:scaleX(0.9320);transform-origin:0 0;">Number</span><span style="position:absolute;left:677.95px;top:121.80px;white-space:nowrap;line-height:8.6px;font-size:8.6px;font-weight:normal;color:#d8d8d8;transform:scaleX(0.9158);transform-origin:0 0;">Cells</span><span style="position:absolute;left:806.15px;top:121.80px;white-space:nowrap;line-height:8.6px;font-size:8.6px;font-weight:normal;color:#d8d8d8;transform:scaleX(0.8561);transform-origin:0 0;">Editing</span><span style="position:absolute;left:906.00px;top:121.80px;white-space:nowrap;line-height:8.6px;font-size:8.6px;font-weight:normal;color:#d8d8d8;transform:scaleX(0.8236);transform-origin:0 0;">Add-ins</span><span style="position:absolute;left:25.00px;top:93.31px;white-space:nowrap;line-height:8.8px;font-size:8.8px;font-weight:normal;color:#707070;transform:scaleX(0.8444);transform-origin:0 0;">Paste</span><span style="position:absolute;left:68.00px;top:68.41px;white-space:nowrap;line-height:9.4px;font-size:9.4px;font-weight:normal;color:#e6e6e6;transform:scaleX(0.8908);transform-origin:0 0;">Cut</span><span style="position:absolute;left:68.00px;top:87.61px;white-space:nowrap;line-height:9.4px;font-size:9.4px;font-weight:normal;color:#e6e6e6;transform:scaleX(0.9136);transform-origin:0 0;">Copy</span><span style="position:absolute;left:68.00px;top:106.21px;white-space:nowrap;line-height:9.4px;font-size:9.4px;font-weight:normal;color:#e6e6e6;transform:scaleX(0.8903);transform-origin:0 0;">Format Painter</span><span style="position:absolute;left:143.50px;top:74.21px;white-space:nowrap;line-height:9.4px;font-size:9.4px;font-weight:normal;color:#e6e6e6;transform:scaleX(0.8993);transform-origin:0 0;">Tahoma</span><span style="position:absolute;left:231.50px;top:74.21px;white-space:nowrap;line-height:9.4px;font-size:9.4px;font-weight:normal;color:#e6e6e6;">8</span><span style="position:absolute;left:264.50px;top:72.40px;white-space:nowrap;line-height:12.5px;font-size:12.5px;font-weight:normal;color:#dcdcdc;transform:scaleX(1.0787);transform-origin:0 0;">A</span><span style="position:absolute;left:284.50px;top:74.38px;white-space:nowrap;line-height:10.5px;font-size:10.5px;font-weight:normal;color:#dcdcdc;transform:scaleX(1.0690);transform-origin:0 0;">A</span><span style="position:absolute;left:146.28px;top:95.52px;white-space:nowrap;line-height:10px;font-size:10px;font-weight:bold;color:#e6e6e6;">B</span><span style="position:absolute;left:167.11px;top:95.52px;white-space:nowrap;line-height:10px;font-size:10px;font-weight:normal;color:#e6e6e6;font-style:italic;font-family:"Liberation Serif",serif;">I</span><span style="position:absolute;left:183.38px;top:95.52px;white-space:nowrap;line-height:10px;font-size:10px;font-weight:normal;color:#e6e6e6;text-decoration:underline;">U</span><span style="position:absolute;left:274.75px;top:94.13px;white-space:nowrap;line-height:11px;font-size:11px;font-weight:normal;color:#dcdcdc;transform:scaleX(1.1574);transform-origin:0 0;">A</span><span style="position:absolute;left:429.80px;top:74.01px;white-space:nowrap;line-height:9.4px;font-size:9.4px;font-weight:normal;color:#e6e6e6;transform:scaleX(0.8887);transform-origin:0 0;">Wrap Text</span><span style="position:absolute;left:429.80px;top:97.41px;white-space:nowrap;line-height:9.4px;font-size:9.4px;font-weight:normal;color:#e6e6e6;transform:scaleX(0.9095);transform-origin:0 0;">Merge &amp; Center</span><span style="position:absolute;left:527.00px;top:74.01px;white-space:nowrap;line-height:9.4px;font-size:9.4px;font-weight:normal;color:#e6e6e6;transform:scaleX(0.8693);transform-origin:0 0;">General</span><span style="position:absolute;left:529.30px;top:94.86px;white-space:nowrap;line-height:13px;font-size:13px;font-weight:normal;color:#d8d8d8;transform:scaleX(0.9676);transform-origin:0 0;">$</span><span style="position:absolute;left:556.85px;top:94.81px;white-space:nowrap;line-height:13.5px;font-size:13.5px;font-weight:normal;color:#d8d8d8;transform:scaleX(0.9571);transform-origin:0 0;">%</span><span style="position:absolute;left:643.35px;top:93.11px;white-space:nowrap;line-height:9.4px;font-size:9.4px;font-weight:normal;color:#e6e6e6;transform:scaleX(1.0446);transform-origin:0 0;">Insert</span><span style="position:absolute;left:673.95px;top:93.11px;white-space:nowrap;line-height:9.4px;font-size:9.4px;font-weight:normal;color:#e6e6e6;transform:scaleX(0.9406);transform-origin:0 0;">Delete</span><span style="position:absolute;left:704.80px;top:92.31px;white-space:nowrap;line-height:9.4px;font-size:9.4px;font-weight:normal;color:#e6e6e6;transform:scaleX(0.9427);transform-origin:0 0;">Format</span><span style="position:absolute;left:749.50px;top:67.64px;white-space:nowrap;line-height:12px;font-size:12px;font-weight:normal;color:#d8d8d8;transform:scaleX(1.0511);transform-origin:0 0;">&#x2211;</span><span style="position:absolute;left:763.00px;top:68.61px;white-space:nowrap;line-height:9.4px;font-size:9.4px;font-weight:normal;color:#e6e6e6;transform:scaleX(0.9180);transform-origin:0 0;">AutoSum</span><span style="position:absolute;left:762.60px;top:86.81px;white-space:nowrap;line-height:9.4px;font-size:9.4px;font-weight:normal;color:#e6e6e6;transform:scaleX(0.9512);transform-origin:0 0;">Fill</span><span style="position:absolute;left:762.60px;top:105.41px;white-space:nowrap;line-height:9.4px;font-size:9.4px;font-weight:normal;color:#e6e6e6;transform:scaleX(0.8212);transform-origin:0 0;">Clear</span><span style="position:absolute;left:825.80px;top:92.31px;white-space:nowrap;line-height:9.4px;font-size:9.4px;font-weight:normal;color:#e6e6e6;">Sort &amp;</span><span style="position:absolute;left:825.50px;top:103.51px;white-space:nowrap;line-height:9.4px;font-size:9.4px;font-weight:normal;color:#e6e6e6;transform:scaleX(0.9595);transform-origin:0 0;">Filter</span><span style="position:absolute;left:859.20px;top:92.31px;white-space:nowrap;line-height:9.4px;font-size:9.4px;font-weight:normal;color:#e6e6e6;transform:scaleX(0.9591);transform-origin:0 0;">Find &amp;</span><span style="position:absolute;left:857.00px;top:103.51px;white-space:nowrap;line-height:9.4px;font-size:9.4px;font-weight:normal;color:#e6e6e6;transform:scaleX(0.8825);transform-origin:0 0;">Select</span><span style="position:absolute;left:903.00px;top:92.31px;white-space:nowrap;line-height:9.4px;font-size:9.4px;font-weight:normal;color:#e6e6e6;transform:scaleX(0.9435);transform-origin:0 0;">Add-ins</span><span style="position:absolute;left:948.10px;top:92.31px;white-space:nowrap;line-height:9.4px;font-size:9.4px;font-weight:normal;color:#e6e6e6;transform:scaleX(0.8993);transform-origin:0 0;">Analyze</span><span style="position:absolute;left:954.35px;top:103.51px;white-space:nowrap;line-height:9.4px;font-size:9.4px;font-weight:normal;color:#e6e6e6;transform:scaleX(0.8833);transform-origin:0 0;">Data</span><span style="position:absolute;left:1099.60px;top:75.56px;white-space:nowrap;line-height:22px;font-size:22px;font-weight:bold;color:#ffffff;transform:scaleX(1.0118);transform-origin:0 0;-webkit-text-stroke:0.7px #fff;">FINM</span><span style="position:absolute;left:1175.60px;top:75.56px;white-space:nowrap;line-height:22px;font-size:22px;font-weight:bold;color:#ffffff;transform:scaleX(0.9086);transform-origin:0 0;-webkit-text-stroke:0.7px #fff;">DELSLAB</span><span style="position:absolute;left:1098.20px;top:99.60px;white-space:nowrap;line-height:17px;font-size:17px;font-weight:normal;color:#ffffff;letter-spacing:12px;transform:scaleX(0.9897);transform-origin:0 0;">Templates</span><span style="position:absolute;left:25.48px;top:133.67px;white-space:nowrap;line-height:9.9px;font-size:9.9px;font-weight:normal;color:#e6e6e6;transform:scaleX(0.8400);transform-origin:0 0;">A</span><span style="position:absolute;left:35.98px;top:133.67px;white-space:nowrap;line-height:9.9px;font-size:9.9px;font-weight:normal;color:#e6e6e6;transform:scaleX(0.8400);transform-origin:0 0;">B</span><span style="position:absolute;left:68.85px;top:133.67px;white-space:nowrap;line-height:9.9px;font-size:9.9px;font-weight:normal;color:#e6e6e6;transform:scaleX(0.8400);transform-origin:0 0;">C</span><span style="position:absolute;left:126.10px;top:133.67px;white-space:nowrap;line-height:9.9px;font-size:9.9px;font-weight:normal;color:#e6e6e6;transform:scaleX(0.8400);transform-origin:0 0;">D</span><span style="position:absolute;left:183.33px;top:133.67px;white-space:nowrap;line-height:9.9px;font-size:9.9px;font-weight:normal;color:#e6e6e6;transform:scaleX(0.8400);transform-origin:0 0;">E</span><span style="position:absolute;left:240.06px;top:133.67px;white-space:nowrap;line-height:9.9px;font-size:9.9px;font-weight:normal;color:#e6e6e6;transform:scaleX(0.8400);transform-origin:0 0;">F</span><span style="position:absolute;left:296.27px;top:133.67px;white-space:nowrap;line-height:9.9px;font-size:9.9px;font-weight:normal;color:#e6e6e6;transform:scaleX(0.8400);transform-origin:0 0;">G</span><span style="position:absolute;left:353.50px;top:133.67px;white-space:nowrap;line-height:9.9px;font-size:9.9px;font-weight:normal;color:#e6e6e6;transform:scaleX(0.8400);transform-origin:0 0;">H</span><span style="position:absolute;left:412.35px;top:133.67px;white-space:nowrap;line-height:9.9px;font-size:9.9px;font-weight:normal;color:#e6e6e6;transform:scaleX(0.8400);transform-origin:0 0;">I</span><span style="position:absolute;left:468.43px;top:133.67px;white-space:nowrap;line-height:9.9px;font-size:9.9px;font-weight:normal;color:#e6e6e6;transform:scaleX(0.8400);transform-origin:0 0;">J</span><span style="position:absolute;left:525.13px;top:133.67px;white-space:nowrap;line-height:9.9px;font-size:9.9px;font-weight:normal;color:#e6e6e6;transform:scaleX(0.8400);transform-origin:0 0;">K</span><span style="position:absolute;left:583.04px;top:133.67px;white-space:nowrap;line-height:9.9px;font-size:9.9px;font-weight:normal;color:#e6e6e6;transform:scaleX(0.8400);transform-origin:0 0;">L</span><span style="position:absolute;left:638.84px;top:133.67px;white-space:nowrap;line-height:9.9px;font-size:9.9px;font-weight:normal;color:#e6e6e6;transform:scaleX(0.8400);transform-origin:0 0;">M</span><span style="position:absolute;left:671.50px;top:133.67px;white-space:nowrap;line-height:9.9px;font-size:9.9px;font-weight:normal;color:#e6e6e6;transform:scaleX(0.8400);transform-origin:0 0;">N</span><span style="position:absolute;left:696.17px;top:133.67px;white-space:nowrap;line-height:9.9px;font-size:9.9px;font-weight:normal;color:#e6e6e6;transform:scaleX(0.8400);transform-origin:0 0;">O</span><span style="position:absolute;left:739.03px;top:133.67px;white-space:nowrap;line-height:9.9px;font-size:9.9px;font-weight:normal;color:#e6e6e6;transform:scaleX(0.8400);transform-origin:0 0;">P</span><span style="position:absolute;left:781.17px;top:133.67px;white-space:nowrap;line-height:9.9px;font-size:9.9px;font-weight:normal;color:#e6e6e6;transform:scaleX(0.8400);transform-origin:0 0;">Q</span><span style="position:absolute;left:824.00px;top:133.67px;white-space:nowrap;line-height:9.9px;font-size:9.9px;font-weight:normal;color:#e6e6e6;transform:scaleX(0.8400);transform-origin:0 0;">R</span><span style="position:absolute;left:866.83px;top:133.67px;white-space:nowrap;line-height:9.9px;font-size:9.9px;font-weight:normal;color:#e6e6e6;transform:scaleX(0.8400);transform-origin:0 0;">S</span><span style="position:absolute;left:909.66px;top:133.67px;white-space:nowrap;line-height:9.9px;font-size:9.9px;font-weight:normal;color:#e6e6e6;transform:scaleX(0.8400);transform-origin:0 0;">T</span><span style="position:absolute;left:951.80px;top:133.67px;white-space:nowrap;line-height:9.9px;font-size:9.9px;font-weight:normal;color:#e6e6e6;transform:scaleX(0.8400);transform-origin:0 0;">U</span><span style="position:absolute;left:994.63px;top:133.67px;white-space:nowrap;line-height:9.9px;font-size:9.9px;font-weight:normal;color:#e6e6e6;transform:scaleX(0.8400);transform-origin:0 0;">V</span><span style="position:absolute;left:1036.08px;top:133.67px;white-space:nowrap;line-height:9.9px;font-size:9.9px;font-weight:normal;color:#e6e6e6;transform:scaleX(0.8400);transform-origin:0 0;">W</span><span style="position:absolute;left:1079.83px;top:133.67px;white-space:nowrap;line-height:9.9px;font-size:9.9px;font-weight:normal;color:#e6e6e6;transform:scaleX(0.8400);transform-origin:0 0;">X</span><span style="position:absolute;left:1122.43px;top:133.67px;white-space:nowrap;line-height:9.9px;font-size:9.9px;font-weight:normal;color:#e6e6e6;transform:scaleX(0.8400);transform-origin:0 0;">Y</span><span style="position:absolute;left:1165.26px;top:133.67px;white-space:nowrap;line-height:9.9px;font-size:9.9px;font-weight:normal;color:#e6e6e6;transform:scaleX(0.8400);transform-origin:0 0;">Z</span><span style="position:absolute;left:1204.86px;top:133.67px;white-space:nowrap;line-height:9.9px;font-size:9.9px;font-weight:normal;color:#e6e6e6;transform:scaleX(0.8400);transform-origin:0 0;">AA</span><span style="position:absolute;left:1247.46px;top:133.67px;white-space:nowrap;line-height:9.9px;font-size:9.9px;font-weight:normal;color:#e6e6e6;transform:scaleX(0.8400);transform-origin:0 0;">AB</span><span style="position:absolute;left:1289.84px;top:133.67px;white-space:nowrap;line-height:9.9px;font-size:9.9px;font-weight:normal;color:#e6e6e6;transform:scaleX(0.8400);transform-origin:0 0;">AC</span><span style="position:absolute;left:1332.44px;top:133.67px;white-space:nowrap;line-height:9.9px;font-size:9.9px;font-weight:normal;color:#e6e6e6;transform:scaleX(0.8400);transform-origin:0 0;">AD</span><span style="position:absolute;left:11.79px;top:152.67px;white-space:nowrap;line-height:10.3px;font-size:10.3px;font-weight:normal;color:#e6e6e6;transform:scaleX(0.8400);transform-origin:0 0;">1</span><span style="position:absolute;left:11.79px;top:168.67px;white-space:nowrap;line-height:10.3px;font-size:10.3px;font-weight:normal;color:#e6e6e6;transform:scaleX(0.8400);transform-origin:0 0;">2</span><span style="position:absolute;left:11.79px;top:182.67px;white-space:nowrap;line-height:10.3px;font-size:10.3px;font-weight:normal;color:#e6e6e6;transform:scaleX(0.8400);transform-origin:0 0;">3</span><span style="position:absolute;left:11.79px;top:194.17px;white-space:nowrap;line-height:10.3px;font-size:10.3px;font-weight:normal;color:#e6e6e6;transform:scaleX(0.8400);transform-origin:0 0;">4</span><span style="position:absolute;left:11.79px;top:209.97px;white-space:nowrap;line-height:10.3px;font-size:10.3px;font-weight:normal;color:#e6e6e6;transform:scaleX(0.8400);transform-origin:0 0;">5</span><span style="position:absolute;left:11.79px;top:224.82px;white-space:nowrap;line-height:10.3px;font-size:10.3px;font-weight:normal;color:#e6e6e6;transform:scaleX(0.8400);transform-origin:0 0;">6</span><span style="position:absolute;left:11.79px;top:239.67px;white-space:nowrap;line-height:10.3px;font-size:10.3px;font-weight:normal;color:#e6e6e6;transform:scaleX(0.8400);transform-origin:0 0;">7</span><span style="position:absolute;left:11.79px;top:254.52px;white-space:nowrap;line-height:10.3px;font-size:10.3px;font-weight:normal;color:#e6e6e6;transform:scaleX(0.8400);transform-origin:0 0;">8</span><span style="position:absolute;left:11.79px;top:269.37px;white-space:nowrap;line-height:10.3px;font-size:10.3px;font-weight:normal;color:#e6e6e6;transform:scaleX(0.8400);transform-origin:0 0;">9</span><span style="position:absolute;left:9.38px;top:284.22px;white-space:nowrap;line-height:10.3px;font-size:10.3px;font-weight:normal;color:#e6e6e6;transform:scaleX(0.8400);transform-origin:0 0;">10</span><span style="position:absolute;left:9.70px;top:299.07px;white-space:nowrap;line-height:10.3px;font-size:10.3px;font-weight:normal;color:#e6e6e6;transform:scaleX(0.8400);transform-origin:0 0;">11</span><span style="position:absolute;left:9.38px;top:313.92px;white-space:nowrap;line-height:10.3px;font-size:10.3px;font-weight:normal;color:#e6e6e6;transform:scaleX(0.8400);transform-origin:0 0;">12</span><span style="position:absolute;left:9.38px;top:328.77px;white-space:nowrap;line-height:10.3px;font-size:10.3px;font-weight:normal;color:#e6e6e6;transform:scaleX(0.8400);transform-origin:0 0;">13</span><span style="position:absolute;left:9.38px;top:343.62px;white-space:nowrap;line-height:10.3px;font-size:10.3px;font-weight:normal;color:#e6e6e6;transform:scaleX(0.8400);transform-origin:0 0;">14</span><span style="position:absolute;left:9.38px;top:358.47px;white-space:nowrap;line-height:10.3px;font-size:10.3px;font-weight:normal;color:#e6e6e6;transform:scaleX(0.8400);transform-origin:0 0;">15</span><span style="position:absolute;left:9.38px;top:373.32px;white-space:nowrap;line-height:10.3px;font-size:10.3px;font-weight:normal;color:#e6e6e6;transform:scaleX(0.8400);transform-origin:0 0;">16</span><span style="position:absolute;left:9.38px;top:388.17px;white-space:nowrap;line-height:10.3px;font-size:10.3px;font-weight:normal;color:#e6e6e6;transform:scaleX(0.8400);transform-origin:0 0;">17</span><span style="position:absolute;left:9.38px;top:403.02px;white-space:nowrap;line-height:10.3px;font-size:10.3px;font-weight:normal;color:#e6e6e6;transform:scaleX(0.8400);transform-origin:0 0;">18</span><span style="position:absolute;left:9.38px;top:417.87px;white-space:nowrap;line-height:10.3px;font-size:10.3px;font-weight:normal;color:#e6e6e6;transform:scaleX(0.8400);transform-origin:0 0;">19</span><span style="position:absolute;left:9.38px;top:432.72px;white-space:nowrap;line-height:10.3px;font-size:10.3px;font-weight:normal;color:#e6e6e6;transform:scaleX(0.8400);transform-origin:0 0;">20</span><span style="position:absolute;left:9.38px;top:447.57px;white-space:nowrap;line-height:10.3px;font-size:10.3px;font-weight:normal;color:#e6e6e6;transform:scaleX(0.8400);transform-origin:0 0;">21</span><span style="position:absolute;left:9.38px;top:462.42px;white-space:nowrap;line-height:10.3px;font-size:10.3px;font-weight:normal;color:#e6e6e6;transform:scaleX(0.8400);transform-origin:0 0;">22</span><span style="position:absolute;left:9.38px;top:477.27px;white-space:nowrap;line-height:10.3px;font-size:10.3px;font-weight:normal;color:#e6e6e6;transform:scaleX(0.8400);transform-origin:0 0;">23</span><span style="position:absolute;left:9.38px;top:492.17px;white-space:nowrap;line-height:10.3px;font-size:10.3px;font-weight:normal;color:#e6e6e6;transform:scaleX(0.8400);transform-origin:0 0;">24</span><span style="position:absolute;left:9.38px;top:512.30px;white-space:nowrap;line-height:10.3px;font-size:10.3px;font-weight:normal;color:#e6e6e6;transform:scaleX(0.8400);transform-origin:0 0;">26</span><span style="position:absolute;left:9.38px;top:527.13px;white-space:nowrap;line-height:10.3px;font-size:10.3px;font-weight:normal;color:#e6e6e6;transform:scaleX(0.8400);transform-origin:0 0;">27</span><span style="position:absolute;left:9.38px;top:541.96px;white-space:nowrap;line-height:10.3px;font-size:10.3px;font-weight:normal;color:#e6e6e6;transform:scaleX(0.8400);transform-origin:0 0;">28</span><span style="position:absolute;left:9.38px;top:556.79px;white-space:nowrap;line-height:10.3px;font-size:10.3px;font-weight:normal;color:#e6e6e6;transform:scaleX(0.8400);transform-origin:0 0;">29</span><span style="position:absolute;left:9.38px;top:571.62px;white-space:nowrap;line-height:10.3px;font-size:10.3px;font-weight:normal;color:#e6e6e6;transform:scaleX(0.8400);transform-origin:0 0;">30</span><span style="position:absolute;left:9.38px;top:586.45px;white-space:nowrap;line-height:10.3px;font-size:10.3px;font-weight:normal;color:#e6e6e6;transform:scaleX(0.8400);transform-origin:0 0;">31</span><span style="position:absolute;left:9.38px;top:601.28px;white-space:nowrap;line-height:10.3px;font-size:10.3px;font-weight:normal;color:#e6e6e6;transform:scaleX(0.8400);transform-origin:0 0;">32</span><span style="position:absolute;left:9.38px;top:616.11px;white-space:nowrap;line-height:10.3px;font-size:10.3px;font-weight:normal;color:#e6e6e6;transform:scaleX(0.8400);transform-origin:0 0;">33</span><span style="position:absolute;left:9.38px;top:630.94px;white-space:nowrap;line-height:10.3px;font-size:10.3px;font-weight:normal;color:#e6e6e6;transform:scaleX(0.8400);transform-origin:0 0;">34</span><span style="position:absolute;left:9.38px;top:645.77px;white-space:nowrap;line-height:10.3px;font-size:10.3px;font-weight:normal;color:#e6e6e6;transform:scaleX(0.8400);transform-origin:0 0;">35</span><span style="position:absolute;left:9.38px;top:660.60px;white-space:nowrap;line-height:10.3px;font-size:10.3px;font-weight:normal;color:#e6e6e6;transform:scaleX(0.8400);transform-origin:0 0;">36</span><span style="position:absolute;left:9.38px;top:675.43px;white-space:nowrap;line-height:10.3px;font-size:10.3px;font-weight:normal;color:#e6e6e6;transform:scaleX(0.8400);transform-origin:0 0;">37</span><span style="position:absolute;left:9.38px;top:690.26px;white-space:nowrap;line-height:10.3px;font-size:10.3px;font-weight:normal;color:#e6e6e6;transform:scaleX(0.8400);transform-origin:0 0;">38</span><span style="position:absolute;left:9.38px;top:705.09px;white-space:nowrap;line-height:10.3px;font-size:10.3px;font-weight:normal;color:#e6e6e6;transform:scaleX(0.8400);transform-origin:0 0;">39</span><span style="position:absolute;left:9.38px;top:719.92px;white-space:nowrap;line-height:10.3px;font-size:10.3px;font-weight:normal;color:#e6e6e6;transform:scaleX(0.8400);transform-origin:0 0;">40</span><span style="position:absolute;left:9.38px;top:734.75px;white-space:nowrap;line-height:10.3px;font-size:10.3px;font-weight:normal;color:#e6e6e6;transform:scaleX(0.8400);transform-origin:0 0;">41</span><span style="position:absolute;left:9.38px;top:749.58px;white-space:nowrap;line-height:10.3px;font-size:10.3px;font-weight:normal;color:#e6e6e6;transform:scaleX(0.8400);transform-origin:0 0;">42</span><span style="position:absolute;left:9.38px;top:764.41px;white-space:nowrap;line-height:10.3px;font-size:10.3px;font-weight:normal;color:#e6e6e6;transform:scaleX(0.8400);transform-origin:0 0;">43</span><span style="position:absolute;left:9.38px;top:779.24px;white-space:nowrap;line-height:10.3px;font-size:10.3px;font-weight:normal;color:#e6e6e6;transform:scaleX(0.8400);transform-origin:0 0;">44</span><span style="position:absolute;left:10.94px;top:499.92px;white-space:nowrap;line-height:5.5px;font-size:5.5px;font-weight:normal;color:#cfcfcf;">25</span><span style="position:absolute;left:11.22px;top:786.36px;white-space:nowrap;line-height:5px;font-size:5px;font-weight:normal;color:#cfcfcf;">45</span><span style="position:absolute;left:36.50px;top:145.98px;white-space:nowrap;line-height:14.6px;font-size:14.6px;font-weight:bold;color:#111111;transform:scaleX(1.0480);transform-origin:0 0;-webkit-text-stroke:0.35px #111;">Financial Charts</span><span style="position:absolute;left:36.50px;top:163.55px;white-space:nowrap;line-height:12.8px;font-size:12.8px;font-weight:bold;color:#111111;-webkit-text-stroke:0.35px #111;">ABC Company Inc.</span><span style="position:absolute;left:35.30px;top:178.52px;white-space:nowrap;line-height:9.8px;font-size:9.8px;font-weight:bold;color:#2f6ee8;transform:scaleX(0.9085);transform-origin:0 0;text-decoration:underline;">Go to Table of Contents</span><span style="position:absolute;left:329.35px;top:204.74px;white-space:nowrap;line-height:11.6px;font-size:11.6px;font-weight:bold;color:#ffffff;transform:scaleX(1.1329);transform-origin:0 0;">5 years</span><span style="position:absolute;left:985.60px;top:204.74px;white-space:nowrap;line-height:11.6px;font-size:11.6px;font-weight:bold;color:#ffffff;transform:scaleX(1.1382);transform-origin:0 0;">60 months</span><span style="position:absolute;left:50.87px;top:289.77px;white-space:nowrap;line-height:9.9px;font-size:9.9px;font-weight:bold;color:#111;transform:scaleX(1.0500);transform-origin:0 0;-webkit-text-stroke:0.25px #111;">14,000</span><span style="position:absolute;left:50.87px;top:313.11px;white-space:nowrap;line-height:9.9px;font-size:9.9px;font-weight:bold;color:#111;transform:scaleX(1.0500);transform-origin:0 0;-webkit-text-stroke:0.25px #111;">12,000</span><span style="position:absolute;left:50.87px;top:336.45px;white-space:nowrap;line-height:9.9px;font-size:9.9px;font-weight:bold;color:#111;transform:scaleX(1.0500);transform-origin:0 0;-webkit-text-stroke:0.25px #111;">10,000</span><span style="position:absolute;left:56.65px;top:359.80px;white-space:nowrap;line-height:9.9px;font-size:9.9px;font-weight:bold;color:#111;transform:scaleX(1.0500);transform-origin:0 0;-webkit-text-stroke:0.25px #111;">8,000</span><span style="position:absolute;left:56.65px;top:383.14px;white-space:nowrap;line-height:9.9px;font-size:9.9px;font-weight:bold;color:#111;transform:scaleX(1.0500);transform-origin:0 0;-webkit-text-stroke:0.25px #111;">6,000</span><span style="position:absolute;left:56.65px;top:406.48px;white-space:nowrap;line-height:9.9px;font-size:9.9px;font-weight:bold;color:#111;transform:scaleX(1.0500);transform-origin:0 0;-webkit-text-stroke:0.25px #111;">4,000</span><span style="position:absolute;left:56.65px;top:429.83px;white-space:nowrap;line-height:9.9px;font-size:9.9px;font-weight:bold;color:#111;transform:scaleX(1.0500);transform-origin:0 0;-webkit-text-stroke:0.25px #111;">2,000</span><span style="position:absolute;left:73.47px;top:453.17px;white-space:nowrap;line-height:9.9px;font-size:9.9px;font-weight:bold;color:#111;transform:scaleX(1.1000);transform-origin:0 0;-webkit-text-stroke:0.25px #111;">-</span><span style="position:absolute;left:136.28px;top:474.87px;white-space:nowrap;line-height:9.9px;font-size:9.9px;font-weight:bold;color:#111;transform:scaleX(1.0697);transform-origin:0 0;-webkit-text-stroke:0.25px #111;">2026</span><span style="position:absolute;left:243.74px;top:474.87px;white-space:nowrap;line-height:9.9px;font-size:9.9px;font-weight:bold;color:#111;transform:scaleX(1.0697);transform-origin:0 0;-webkit-text-stroke:0.25px #111;">2027</span><span style="position:absolute;left:351.20px;top:474.87px;white-space:nowrap;line-height:9.9px;font-size:9.9px;font-weight:bold;color:#111;transform:scaleX(1.0697);transform-origin:0 0;-webkit-text-stroke:0.25px #111;">2028</span><span style="position:absolute;left:458.66px;top:474.87px;white-space:nowrap;line-height:9.9px;font-size:9.9px;font-weight:bold;color:#111;transform:scaleX(1.0697);transform-origin:0 0;-webkit-text-stroke:0.25px #111;">2029</span><span style="position:absolute;left:566.12px;top:474.87px;white-space:nowrap;line-height:9.9px;font-size:9.9px;font-weight:bold;color:#111;transform:scaleX(1.0697);transform-origin:0 0;-webkit-text-stroke:0.25px #111;">2030</span><span style="position:absolute;left:155.60px;top:224.79px;white-space:nowrap;line-height:16px;font-size:16px;font-weight:bold;color:#0a0a0a;transform:scaleX(1.0824);transform-origin:0 0;-webkit-text-stroke:0.45px #0a0a0a;">REVENUE BREAKDOWN - $'000</span><span style="position:absolute;left:211.55px;top:512.69px;white-space:nowrap;line-height:16px;font-size:16px;font-weight:bold;color:#0a0a0a;transform:scaleX(1.0918);transform-origin:0 0;-webkit-text-stroke:0.45px #0a0a0a;">CASH BALANCE - $'000</span><span style="position:absolute;left:873.10px;top:224.59px;white-space:nowrap;line-height:16px;font-size:16px;font-weight:bold;color:#0a0a0a;transform:scaleX(1.0824);transform-origin:0 0;-webkit-text-stroke:0.45px #0a0a0a;">REVENUE BREAKDOWN - $'000</span><span style="position:absolute;left:912.85px;top:511.29px;white-space:nowrap;line-height:16px;font-size:16px;font-weight:bold;color:#0a0a0a;transform:scaleX(1.0863);transform-origin:0 0;-webkit-text-stroke:0.45px #0a0a0a;">CASH BALANCE - $'000</span><span style="position:absolute;left:58.90px;top:256.05px;white-space:nowrap;line-height:8.3px;font-size:8.3px;font-weight:normal;color:#363636;">Ergonomic Desk Gadget</span><span style="position:absolute;left:172.10px;top:256.05px;white-space:nowrap;line-height:8.3px;font-size:8.3px;font-weight:normal;color:#363636;">Smart Home Diffuser</span><span style="position:absolute;left:274.30px;top:256.05px;white-space:nowrap;line-height:8.3px;font-size:8.3px;font-weight:normal;color:#363636;">Portable Espresso Maker</span><span style="position:absolute;left:389.40px;top:256.05px;white-space:nowrap;line-height:8.3px;font-size:8.3px;font-weight:normal;color:#363636;">Eco-Friendly Kitchen Tool</span><span style="position:absolute;left:703.40px;top:251.05px;white-space:nowrap;line-height:8.3px;font-size:8.3px;font-weight:normal;color:#363636;">Ergonomic Desk Gadget</span><span style="position:absolute;left:813.60px;top:251.05px;white-space:nowrap;line-height:8.3px;font-size:8.3px;font-weight:normal;color:#363636;">Smart Home Diffuser</span><span style="position:absolute;left:912.30px;top:251.05px;white-space:nowrap;line-height:8.3px;font-size:8.3px;font-weight:normal;color:#363636;">Portable Espresso Maker</span><span style="position:absolute;left:1024.40px;top:251.05px;white-space:nowrap;line-height:8.3px;font-size:8.3px;font-weight:normal;color:#363636;">Eco-Friendly Kitchen Tool</span><span style="position:absolute;left:688.75px;top:289.07px;white-space:nowrap;line-height:9.9px;font-size:9.9px;font-weight:bold;color:#111;transform:scaleX(1.0500);transform-origin:0 0;-webkit-text-stroke:0.25px #111;">1,400</span><span style="position:absolute;left:688.75px;top:312.37px;white-space:nowrap;line-height:9.9px;font-size:9.9px;font-weight:bold;color:#111;transform:scaleX(1.0500);transform-origin:0 0;-webkit-text-stroke:0.25px #111;">1,200</span><span style="position:absolute;left:688.75px;top:335.67px;white-space:nowrap;line-height:9.9px;font-size:9.9px;font-weight:bold;color:#111;transform:scaleX(1.0500);transform-origin:0 0;-webkit-text-stroke:0.25px #111;">1,000</span><span style="position:absolute;left:697.39px;top:358.97px;white-space:nowrap;line-height:9.9px;font-size:9.9px;font-weight:bold;color:#111;transform:scaleX(1.0500);transform-origin:0 0;-webkit-text-stroke:0.25px #111;">800</span><span style="position:absolute;left:697.39px;top:382.27px;white-space:nowrap;line-height:9.9px;font-size:9.9px;font-weight:bold;color:#111;transform:scaleX(1.0500);transform-origin:0 0;-webkit-text-stroke:0.25px #111;">600</span><span style="position:absolute;left:697.39px;top:405.57px;white-space:nowrap;line-height:9.9px;font-size:9.9px;font-weight:bold;color:#111;transform:scaleX(1.0500);transform-origin:0 0;-webkit-text-stroke:0.25px #111;">400</span><span style="position:absolute;left:697.39px;top:428.87px;white-space:nowrap;line-height:9.9px;font-size:9.9px;font-weight:bold;color:#111;transform:scaleX(1.0500);transform-origin:0 0;-webkit-text-stroke:0.25px #111;">200</span><span style="position:absolute;left:705.57px;top:452.17px;white-space:nowrap;line-height:9.9px;font-size:9.9px;font-weight:bold;color:#111;transform:scaleX(1.1000);transform-origin:0 0;-webkit-text-stroke:0.25px #111;">-</span><span style="position:absolute;left:44.97px;top:543.97px;white-space:nowrap;line-height:9.9px;font-size:9.9px;font-weight:bold;color:#111;transform:scaleX(1.0500);transform-origin:0 0;-webkit-text-stroke:0.25px #111;">12,000</span><span style="position:absolute;left:44.97px;top:576.79px;white-space:nowrap;line-height:9.9px;font-size:9.9px;font-weight:bold;color:#111;transform:scaleX(1.0500);transform-origin:0 0;-webkit-text-stroke:0.25px #111;">10,000</span><span style="position:absolute;left:50.75px;top:609.60px;white-space:nowrap;line-height:9.9px;font-size:9.9px;font-weight:bold;color:#111;transform:scaleX(1.0500);transform-origin:0 0;-webkit-text-stroke:0.25px #111;">8,000</span><span style="position:absolute;left:50.75px;top:642.42px;white-space:nowrap;line-height:9.9px;font-size:9.9px;font-weight:bold;color:#111;transform:scaleX(1.0500);transform-origin:0 0;-webkit-text-stroke:0.25px #111;">6,000</span><span style="position:absolute;left:50.75px;top:675.24px;white-space:nowrap;line-height:9.9px;font-size:9.9px;font-weight:bold;color:#111;transform:scaleX(1.0500);transform-origin:0 0;-webkit-text-stroke:0.25px #111;">4,000</span><span style="position:absolute;left:50.75px;top:708.05px;white-space:nowrap;line-height:9.9px;font-size:9.9px;font-weight:bold;color:#111;transform:scaleX(1.0500);transform-origin:0 0;-webkit-text-stroke:0.25px #111;">2,000</span><span style="position:absolute;left:67.57px;top:740.87px;white-space:nowrap;line-height:9.9px;font-size:9.9px;font-weight:bold;color:#111;transform:scaleX(1.1000);transform-origin:0 0;-webkit-text-stroke:0.25px #111;">-</span><span style="position:absolute;left:130.27px;top:762.97px;white-space:nowrap;line-height:9.9px;font-size:9.9px;font-weight:bold;color:#111;transform:scaleX(1.0697);transform-origin:0 0;-webkit-text-stroke:0.25px #111;">2026</span><span style="position:absolute;left:238.51px;top:762.97px;white-space:nowrap;line-height:9.9px;font-size:9.9px;font-weight:bold;color:#111;transform:scaleX(1.0697);transform-origin:0 0;-webkit-text-stroke:0.25px #111;">2027</span><span style="position:absolute;left:346.75px;top:762.97px;white-space:nowrap;line-height:9.9px;font-size:9.9px;font-weight:bold;color:#111;transform:scaleX(1.0697);transform-origin:0 0;-webkit-text-stroke:0.25px #111;">2028</span><span style="position:absolute;left:454.99px;top:762.97px;white-space:nowrap;line-height:9.9px;font-size:9.9px;font-weight:bold;color:#111;transform:scaleX(1.0697);transform-origin:0 0;-webkit-text-stroke:0.25px #111;">2029</span><span style="position:absolute;left:563.23px;top:762.97px;white-space:nowrap;line-height:9.9px;font-size:9.9px;font-weight:bold;color:#111;transform:scaleX(1.0697);transform-origin:0 0;-webkit-text-stroke:0.25px #111;">2030</span><span style="position:absolute;left:688.17px;top:545.37px;white-space:nowrap;line-height:9.9px;font-size:9.9px;font-weight:bold;color:#111;transform:scaleX(1.0500);transform-origin:0 0;-webkit-text-stroke:0.25px #111;">12,000</span><span style="position:absolute;left:688.17px;top:577.90px;white-space:nowrap;line-height:9.9px;font-size:9.9px;font-weight:bold;color:#111;transform:scaleX(1.0500);transform-origin:0 0;-webkit-text-stroke:0.25px #111;">10,000</span><span style="position:absolute;left:693.95px;top:610.44px;white-space:nowrap;line-height:9.9px;font-size:9.9px;font-weight:bold;color:#111;transform:scaleX(1.0500);transform-origin:0 0;-webkit-text-stroke:0.25px #111;">8,000</span><span style="position:absolute;left:693.95px;top:642.97px;white-space:nowrap;line-height:9.9px;font-size:9.9px;font-weight:bold;color:#111;transform:scaleX(1.0500);transform-origin:0 0;-webkit-text-stroke:0.25px #111;">6,000</span><span style="position:absolute;left:693.95px;top:675.50px;white-space:nowrap;line-height:9.9px;font-size:9.9px;font-weight:bold;color:#111;transform:scaleX(1.0500);transform-origin:0 0;-webkit-text-stroke:0.25px #111;">4,000</span><span style="position:absolute;left:693.95px;top:708.04px;white-space:nowrap;line-height:9.9px;font-size:9.9px;font-weight:bold;color:#111;transform:scaleX(1.0500);transform-origin:0 0;-webkit-text-stroke:0.25px #111;">2,000</span><span style="position:absolute;left:710.77px;top:740.57px;white-space:nowrap;line-height:9.9px;font-size:9.9px;font-weight:bold;color:#111;transform:scaleX(1.1000);transform-origin:0 0;-webkit-text-stroke:0.25px #111;">-</span><span style="position:absolute;left:91.05px;top:807.52px;white-space:nowrap;line-height:10.4px;font-size:10.4px;font-weight:normal;color:#e8e8e8;transform:scaleX(0.9449);transform-origin:0 0;">Contents</span><span style="position:absolute;left:149.70px;top:807.82px;white-space:nowrap;line-height:10.4px;font-size:10.4px;font-weight:normal;color:#1a1a1a;transform:scaleX(0.9539);transform-origin:0 0;">Dashboard</span><span style="position:absolute;left:217.00px;top:807.82px;white-space:nowrap;line-height:10.4px;font-size:10.4px;font-weight:normal;color:#1a1a1a;transform:scaleX(0.8992);transform-origin:0 0;">Revenue</span><span style="position:absolute;left:273.90px;top:807.82px;white-space:nowrap;line-height:10.4px;font-size:10.4px;font-weight:normal;color:#1a1a1a;transform:scaleX(0.8686);transform-origin:0 0;">COGS &amp; OPEX</span><span style="position:absolute;left:356.20px;top:807.82px;white-space:nowrap;line-height:10.4px;font-size:10.4px;font-weight:normal;color:#1a1a1a;transform:scaleX(0.9161);transform-origin:0 0;">Payroll</span><span style="position:absolute;left:404.80px;top:807.82px;white-space:nowrap;line-height:10.4px;font-size:10.4px;font-weight:normal;color:#1a1a1a;transform:scaleX(0.8259);transform-origin:0 0;">CAPEX</span><span style="position:absolute;left:452.70px;top:807.82px;white-space:nowrap;line-height:10.4px;font-size:10.4px;font-weight:normal;color:#1a1a1a;transform:scaleX(0.9361);transform-origin:0 0;">CapTable</span><span style="position:absolute;left:513.70px;top:807.82px;white-space:nowrap;line-height:10.4px;font-size:10.4px;font-weight:normal;color:#1a1a1a;transform:scaleX(0.9364);transform-origin:0 0;">Capital</span><span style="position:absolute;left:562.80px;top:807.82px;white-space:nowrap;line-height:10.4px;font-size:10.4px;font-weight:normal;color:#1a1a1a;transform:scaleX(0.6614);transform-origin:0 0;">IS</span><span style="position:absolute;left:589.00px;top:807.82px;white-space:nowrap;line-height:10.4px;font-size:10.4px;font-weight:normal;color:#1a1a1a;transform:scaleX(0.7360);transform-origin:0 0;">CF</span><span style="position:absolute;left:618.00px;top:807.82px;white-space:nowrap;line-height:10.4px;font-size:10.4px;font-weight:normal;color:#1a1a1a;transform:scaleX(0.7640);transform-origin:0 0;">BS</span><span style="position:absolute;left:647.40px;top:807.82px;white-space:nowrap;line-height:10.4px;font-size:10.4px;font-weight:normal;color:#1a1a1a;transform:scaleX(0.9174);transform-origin:0 0;">Scenarios</span><span style="position:absolute;left:708.70px;top:807.82px;white-space:nowrap;line-height:10.4px;font-size:10.4px;font-weight:normal;color:#1a1a1a;transform:scaleX(0.9844);transform-origin:0 0;">Valuation</span><span style="position:absolute;left:770.30px;top:807.82px;white-space:nowrap;line-height:10.4px;font-size:10.4px;font-weight:normal;color:#1a1a1a;transform:scaleX(0.9355);transform-origin:0 0;">Summary</span><span style="position:absolute;left:830.70px;top:807.82px;white-space:nowrap;line-height:10.4px;font-size:10.4px;font-weight:normal;color:#1a1a1a;transform:scaleX(0.7351);transform-origin:0 0;">BE</span><span style="position:absolute;left:859.70px;top:807.82px;white-space:nowrap;line-height:10.4px;font-size:10.4px;font-weight:normal;color:#1a1a1a;transform:scaleX(0.8736);transform-origin:0 0;">ROIC</span><span style="position:absolute;left:948.40px;top:807.82px;white-space:nowrap;line-height:10.4px;font-size:10.4px;font-weight:normal;color:#1a1a1a;transform:scaleX(0.7926);transform-origin:0 0;">KPIs</span><span style="position:absolute;left:980.50px;top:807.82px;white-space:nowrap;line-height:10.4px;font-size:10.4px;font-weight:normal;color:#1a1a1a;">Sc</span><span style="position:absolute;left:900.45px;top:804.72px;white-space:nowrap;line-height:10.4px;font-size:10.4px;font-weight:normal;color:#222;transform:scaleX(0.9311);transform-origin:0 0;">Charts</span><span style="position:absolute;left:12.70px;top:827.01px;white-space:nowrap;line-height:8.8px;font-size:8.8px;font-weight:normal;color:#d0d0d0;transform:scaleX(0.8452);transform-origin:0 0;">Ready</span><span style="position:absolute;left:82.90px;top:827.01px;white-space:nowrap;line-height:8.8px;font-size:8.8px;font-weight:bold;color:#e6e6e6;transform:scaleX(0.8523);transform-origin:0 0;">Accessibility: Investigate</span><span style="position:absolute;left:1359.80px;top:827.01px;white-space:nowrap;line-height:8.8px;font-size:8.8px;font-weight:normal;color:#e0e0e0;transform:scaleX(0.9241);transform-origin:0 0;">110%</span>
</body></html>
